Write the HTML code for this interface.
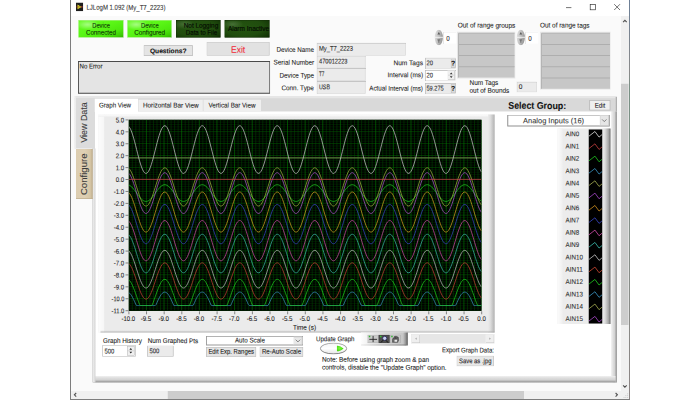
<!DOCTYPE html>
<html><head><meta charset="utf-8"><title>LJLogM 1.092 (My_T7_2223)</title>
<style>
html,body{margin:0;padding:0;background:#fff;}
body{width:700px;height:400px;overflow:hidden;position:relative;font-family:"Liberation Sans",sans-serif;}
#clip{position:absolute;left:0;top:0;width:700px;height:400px;overflow:hidden;background:#fff;}
#root{position:absolute;left:0;top:0;width:2800px;height:1600px;transform:scale(0.25);transform-origin:0 0;}
#root div,#root svg{position:absolute;display:block;}
.t{margin:0;padding:0;white-space:nowrap;-webkit-text-stroke:0.32px currentColor;}
</style></head><body><div id="clip"><div id="root">
<div style="left:280px;top:0px;width:2240px;height:1600px;background:#fafafa;"></div>
<div style="left:284px;top:0px;width:2232px;height:64px;background:#fff;"></div>
<svg style="left:304px;top:9.6px" width="28.8" height="35.2" viewBox="0 0 7.2 8.8"><rect width="7.2" height="8.8" fill="#1e1e1e"/><path d="M1.5 2 L5.6 4.4 L1.5 6.8 Z" fill="#e6d62a"/><path d="M2.6 3.7 L3.9 4.4 L2.6 5.1Z" fill="#1e1e1e"/><path d="M5 4.4 H6.6" stroke="#e84040" stroke-width="0.9"/><path d="M0.5 4.4 H1.6" stroke="#e84040" stroke-width="0.8"/></svg>
<div class="t" style="left:345.6px;top:7.28px;width:381.83px;height:45.44px;line-height:45.44px;font-size:28.8px;color:#303030;transform:rotate(0.2deg) scaleX(0.836);transform-origin:0 50%;">LJLogM 1.092 (My_T7_2223)</div>
<svg style="left:2240px;top:0px" width="264" height="64" viewBox="0 0 66 16"><g stroke="#2a2a2a" stroke-width="0.65" fill="none"><path d="M6 7.6 H11.4"/><rect x="30.2" y="4.4" width="5.2" height="5.4"/><path d="M54.2 4.2 L60 10 M60 4.2 L54.2 10"/></g></svg>
<div style="left:2484px;top:64px;width:32px;height:1500px;background:#f0f0f0;"></div>
<div style="left:2484px;top:335.2px;width:30.4px;height:964.8px;background:#cdcdcd;"></div>
<div style="left:284px;top:1564px;width:2232px;height:32px;background:#f0f0f0;"></div>
<div style="left:670.8px;top:1564px;width:1425.2px;height:32px;background:#cdcdcd;"></div>
<svg style="left:2480px;top:64px" width="40" height="1536" viewBox="0 0 10 384"><g stroke="#505050" stroke-width="1.1" fill="none"><path d="M3.1 6.1 L4.9 4.3 L6.7 6.1"/><path d="M3.1 369.3 L4.9 371.1 L6.7 369.3"/></g></svg>
<svg style="left:284px;top:1560px" width="2240" height="40" viewBox="0 0 560 10"><g stroke="#505050" stroke-width="1.1" fill="none"><path d="M5.2 3 L3.4 4.8 L5.2 6.6"/><path d="M544.6 3 L546.4 4.8 L544.6 6.6"/></g><g fill="#c4c4c4"><rect x="556.2" y="7" width="0.9" height="0.9"/><rect x="554.4" y="7" width="0.9" height="0.9"/><rect x="556.2" y="5.2" width="0.9" height="0.9"/><rect x="552.6" y="7" width="0.9" height="0.9"/><rect x="554.4" y="5.2" width="0.9" height="0.9"/><rect x="556.2" y="3.4" width="0.9" height="0.9"/></g></svg>
<div style="left:280px;top:0px;width:4px;height:1600px;background:#7d7d7d;"></div>
<div style="left:2516px;top:0px;width:4px;height:1600px;background:linear-gradient(180deg,#6c7f96 0%,#8a8a8a 18%,#789084 22%,#86908a 60%,#8c8484 100%);"></div>
<div style="left:280px;top:1596px;width:2240px;height:4px;background:#7d7d7d;"></div>
<div style="left:313.6px;top:80px;width:180.8px;height:70px;background:radial-gradient(ellipse 26% 30% at 20% 26%, rgba(190,255,165,.75) 0%, rgba(120,255,60,0) 100%), linear-gradient(160deg,#66fb22 0%,#5af616 45%,#4ee80e 72%,#3ccc04 90%,#2fae00 100%);box-shadow:inset 0 0 0 2px rgba(215,235,205,.8);overflow:hidden;"></div>
<div style="left:508.8px;top:80px;width:178.4px;height:70px;background:radial-gradient(ellipse 26% 30% at 20% 26%, rgba(190,255,165,.75) 0%, rgba(120,255,60,0) 100%), linear-gradient(160deg,#66fb22 0%,#5af616 45%,#4ee80e 72%,#3ccc04 90%,#2fae00 100%);box-shadow:inset 0 0 0 2px rgba(215,235,205,.8);overflow:hidden;"></div>
<div style="left:704px;top:80px;width:178.4px;height:70px;background:radial-gradient(ellipse 24% 28% at 18% 24%, rgba(85,125,70,.7) 0%, rgba(40,84,24,0) 100%), radial-gradient(ellipse 80% 90% at 42% 42%, #245410 0%, #204c0e 55%, #133606 85%, #0a2400 100%);box-shadow:inset 0 0 0 2px rgba(20,40,10,.7);overflow:hidden;"></div>
<div style="left:898.4px;top:80px;width:179.6px;height:70px;background:radial-gradient(ellipse 24% 28% at 18% 24%, rgba(85,125,70,.7) 0%, rgba(40,84,24,0) 100%), radial-gradient(ellipse 80% 90% at 42% 42%, #245410 0%, #204c0e 55%, #133606 85%, #0a2400 100%);box-shadow:inset 0 0 0 2px rgba(20,40,10,.7);overflow:hidden;"></div>
<div class="t" style="left:360.02px;top:80.06px;width:88.37px;height:43.88px;line-height:43.88px;font-size:27.6px;color:#0a2c05;text-align:center;transform:rotate(0.2deg) scaleX(0.834);transform-origin:50% 50%;">Device</div>
<div class="t" style="left:335.45px;top:107.66px;width:137.5px;height:43.88px;line-height:43.88px;font-size:27.6px;color:#0a2c05;text-align:center;transform:rotate(0.2deg) scaleX(0.899);transform-origin:50% 50%;">Connected</div>
<div class="t" style="left:554.82px;top:80.06px;width:88.37px;height:43.88px;line-height:43.88px;font-size:27.6px;color:#0a2c05;text-align:center;transform:rotate(0.2deg) scaleX(0.834);transform-origin:50% 50%;">Device</div>
<div class="t" style="left:529.49px;top:107.66px;width:139.03px;height:43.88px;line-height:43.88px;font-size:27.6px;color:#0a2c05;text-align:center;transform:rotate(0.2deg) scaleX(0.918);transform-origin:50% 50%;">Configured</div>
<div class="t" style="left:719.95px;top:80.06px;width:152.85px;height:43.88px;line-height:43.88px;font-size:27.6px;color:#040c02;text-align:right;transform:rotate(0.2deg) scaleX(0.927);transform-origin:100% 50%;-webkit-text-stroke:0.64px #040c02;">Not Logging</div>
<div class="t" style="left:723.67px;top:107.66px;width:145.13px;height:43.88px;line-height:43.88px;font-size:27.6px;color:#040c02;text-align:right;transform:rotate(0.2deg) scaleX(0.893);transform-origin:100% 50%;-webkit-text-stroke:0.64px #040c02;">Data to File</div>
<div style="left:898.4px;top:80px;width:179.6px;height:70px;overflow:hidden;background:none;"><div class="t" style="left:13.6px;top:13.2px;line-height:44px;font-size:27.6px;color:#040c02;-webkit-text-stroke:0.64px #040c02;transform:scaleX(0.94);transform-origin:0 50%">Alarm Inactive</div></div>
<div style="left:574.4px;top:180.8px;width:196.8px;height:43.2px;background:#e4e4e4;box-shadow:inset 0 0 0 2.8px #bcbcbc;"></div>
<div class="t" style="left:596.39px;top:181.92px;width:153.62px;height:43.36px;line-height:43.36px;font-size:27.2px;color:#111;text-align:center;font-weight:bold;transform:rotate(0.2deg) scaleX(0.976);transform-origin:50% 50%;">Questions?</div>
<div style="left:826.4px;top:168px;width:252px;height:54.4px;background:#e2e2e2;box-shadow:inset 0 0 0 2.4px #c4c4c4;"></div>
<div class="t" style="left:918.66px;top:169.56px;width:66.68px;height:56.88px;line-height:56.88px;font-size:37.6px;color:#f02838;text-align:center;transform:rotate(0.2deg) scaleX(0.906);transform-origin:50% 50%;">Exit</div>
<div style="left:312px;top:244px;width:768.8px;height:131.2px;background:#e4e4e4;box-shadow:inset 0 0 0 3.6px #4a4a4a;"></div>
<div class="t" style="left:318.4px;top:243.26px;width:108.29px;height:43.88px;line-height:43.88px;font-size:27.6px;color:#161616;transform:rotate(0.2deg) scaleX(0.882);transform-origin:0 50%;">No Error</div>
<div style="left:1266.4px;top:171.2px;width:356.8px;height:50.4px;background:#ebebeb;box-shadow:inset 2.8px 2.8px 0 0 #b9b9b9, inset -2.4px -2.4px 0 0 #d6d6d6;"></div>
<div class="t" style="left:1276px;top:171.52px;width:162.77px;height:43.36px;line-height:43.36px;font-size:27.2px;color:#262626;transform:rotate(0.2deg) scaleX(0.857);transform-origin:0 50%;">My_T7_2223</div>
<div style="left:1266.4px;top:221.6px;width:196px;height:51.2px;background:#ebebeb;box-shadow:inset 2.8px 2.8px 0 0 #b9b9b9, inset -2.4px -2.4px 0 0 #d6d6d6;"></div>
<div class="t" style="left:1276px;top:223.12px;width:140.15px;height:43.36px;line-height:43.36px;font-size:27.2px;color:#262626;transform:rotate(0.2deg) scaleX(0.837);transform-origin:0 50%;">470012223</div>
<div style="left:1266.4px;top:272.8px;width:196px;height:51.2px;background:#ebebeb;box-shadow:inset 2.8px 2.8px 0 0 #b9b9b9, inset -2.4px -2.4px 0 0 #d6d6d6;"></div>
<div class="t" style="left:1276px;top:274.32px;width:35.74px;height:43.36px;line-height:43.36px;font-size:27.2px;color:#262626;transform:rotate(0.2deg) scaleX(0.693);transform-origin:0 50%;">T7</div>
<div style="left:1266.4px;top:324px;width:196px;height:51.2px;background:#ebebeb;box-shadow:inset 2.8px 2.8px 0 0 #b9b9b9, inset -2.4px -2.4px 0 0 #d6d6d6;"></div>
<div class="t" style="left:1276px;top:325.52px;width:59.93px;height:43.36px;line-height:43.36px;font-size:27.2px;color:#262626;transform:rotate(0.2deg) scaleX(0.787);transform-origin:0 50%;">USB</div>
<div class="t" style="left:1086.34px;top:177.26px;width:169.66px;height:43.88px;line-height:43.88px;font-size:27.6px;color:#1c1c1c;text-align:right;transform:rotate(0.2deg) scaleX(0.905);transform-origin:100% 50%;">Device Name</div>
<div class="t" style="left:1075.6px;top:228.46px;width:180.4px;height:43.88px;line-height:43.88px;font-size:27.6px;color:#1c1c1c;text-align:right;transform:rotate(0.2deg) scaleX(0.918);transform-origin:100% 50%;">Serial Number</div>
<div class="t" style="left:1100.63px;top:280.46px;width:155.37px;height:43.88px;line-height:43.88px;font-size:27.6px;color:#1c1c1c;text-align:right;transform:rotate(0.2deg) scaleX(0.912);transform-origin:100% 50%;">Device Type</div>
<div class="t" style="left:1111.34px;top:330.06px;width:144.66px;height:43.88px;line-height:43.88px;font-size:27.6px;color:#1c1c1c;text-align:right;transform:rotate(0.2deg) scaleX(0.924);transform-origin:100% 50%;">Conn. Type</div>
<div style="left:1700px;top:229.6px;width:122.4px;height:44px;background:#ebebeb;box-shadow:inset 2.8px 2.8px 0 0 #b9b9b9, inset -2.4px -2.4px 0 0 #d6d6d6;"></div>
<div class="t" style="left:1706.4px;top:229.92px;width:34.26px;height:43.36px;line-height:43.36px;font-size:27.2px;color:#262626;transform:rotate(0.2deg) scaleX(0.846);transform-origin:0 50%;">20</div>
<div style="left:1700px;top:280px;width:122.4px;height:41.6px;background:#fff;box-shadow:inset 2.8px 2.8px 0 0 #b9b9b9, inset -2.4px -2.4px 0 0 #d6d6d6;"></div>
<div class="t" style="left:1706.4px;top:279.12px;width:34.26px;height:43.36px;line-height:43.36px;font-size:27.2px;color:#262626;transform:rotate(0.2deg) scaleX(0.846);transform-origin:0 50%;">20</div>
<div style="left:1700px;top:332px;width:122.4px;height:43.2px;background:#ebebeb;box-shadow:inset 2.8px 2.8px 0 0 #b9b9b9, inset -2.4px -2.4px 0 0 #d6d6d6;"></div>
<div class="t" style="left:1706.4px;top:331.12px;width:87.2px;height:43.36px;line-height:43.36px;font-size:27.2px;color:#262626;transform:rotate(0.2deg) scaleX(0.827);transform-origin:0 50%;">59.275</div>
<div class="t" style="left:1564.25px;top:229.66px;width:127.75px;height:43.88px;line-height:43.88px;font-size:27.6px;color:#1c1c1c;text-align:right;transform:rotate(0.2deg) scaleX(0.954);transform-origin:100% 50%;">Num Tags</div>
<div class="t" style="left:1534.65px;top:278.46px;width:157.35px;height:43.88px;line-height:43.88px;font-size:27.6px;color:#1c1c1c;text-align:right;transform:rotate(0.2deg) scaleX(0.926);transform-origin:100% 50%;">Interval (ms)</div>
<div class="t" style="left:1450.27px;top:331.66px;width:241.73px;height:43.88px;line-height:43.88px;font-size:27.6px;color:#1c1c1c;text-align:right;transform:rotate(0.2deg) scaleX(0.902);transform-origin:100% 50%;">Actual Interval (ms)</div>
<div style="left:1803.2px;top:233.6px;width:19.2px;height:37.6px;background:#dadada;box-shadow:inset 0 0 0 2px #b0b0b0;"></div>
<div class="t" style="left:1802.37px;top:230.86px;width:20.86px;height:43.88px;line-height:43.88px;font-size:27.6px;color:#111;text-align:center;font-weight:bold;transform:rotate(0.2deg) scaleX(1.000);transform-origin:50% 50%;">?</div>
<div style="left:1803.2px;top:335.2px;width:19.2px;height:37.6px;background:#dadada;box-shadow:inset 0 0 0 2px #b0b0b0;"></div>
<div class="t" style="left:1802.37px;top:332.46px;width:20.86px;height:43.88px;line-height:43.88px;font-size:27.6px;color:#111;text-align:center;font-weight:bold;transform:rotate(0.2deg) scaleX(1.000);transform-origin:50% 50%;">?</div>
<div style="left:1790.4px;top:282.4px;width:29.6px;height:36.8px;background:#f0f0f0;box-shadow:inset 0 0 0 2px #b8b8b8;"></div>
<svg style="left:1790.4px;top:282.4px" width="29.6" height="36.8" viewBox="0 0 7.4 9.2"><path d="M3.7 1.9 L5.1 3.7 H2.3Z M3.7 7.5 L5.1 5.7 H2.3Z" fill="#333"/><path d="M0.6 4.7H6.8" stroke="#b0b0b0" stroke-width="0.4"/></svg>
<div style="left:1772.8px;top:127.2px;width:52px;height:47.2px;background:#fff;box-shadow:inset 2.4px 2.4px 0 0 #d8d8d8;"></div>
<div class="t" style="left:1784.8px;top:132.06px;width:19.35px;height:43.88px;line-height:43.88px;font-size:27.6px;color:#333;transform:rotate(0.2deg) scaleX(0.912);transform-origin:0 50%;">0</div>
<svg style="left:1738.4px;top:117.6px" width="34.4" height="64" viewBox="0 0 8.6 16"><defs><linearGradient id="sg435" x1="0" y1="0" x2="1" y2="0.3"><stop offset="0" stop-color="#e6e6e6"/><stop offset="0.5" stop-color="#c4c4c4"/><stop offset="1" stop-color="#9a9a9a"/></linearGradient></defs><ellipse cx="4.3" cy="8" rx="4.1" ry="7.8" fill="url(#sg435)"/><path d="M0 7.8 H8.6" stroke="#f6f6f6" stroke-width="0.9"/><path d="M4.3 2.6 L5.7 5 H2.9Z" fill="#5a5a5a"/><path d="M2.9 10.4 H5.7 M4.3 10.4 V13.2" stroke="#5a5a5a" stroke-width="0.8" fill="none"/></svg>
<div style="left:2100.8px;top:127.2px;width:52px;height:47.2px;background:#fff;box-shadow:inset 2.4px 2.4px 0 0 #d8d8d8;"></div>
<div class="t" style="left:2112.8px;top:132.06px;width:19.35px;height:43.88px;line-height:43.88px;font-size:27.6px;color:#333;transform:rotate(0.2deg) scaleX(0.912);transform-origin:0 50%;">0</div>
<svg style="left:2066.4px;top:117.6px" width="34.4" height="64" viewBox="0 0 8.6 16"><defs><linearGradient id="sg517" x1="0" y1="0" x2="1" y2="0.3"><stop offset="0" stop-color="#e6e6e6"/><stop offset="0.5" stop-color="#c4c4c4"/><stop offset="1" stop-color="#9a9a9a"/></linearGradient></defs><ellipse cx="4.3" cy="8" rx="4.1" ry="7.8" fill="url(#sg517)"/><path d="M0 7.8 H8.6" stroke="#f6f6f6" stroke-width="0.9"/><path d="M4.3 2.6 L5.7 5 H2.9Z" fill="#5a5a5a"/><path d="M2.9 10.4 H5.7 M4.3 10.4 V13.2" stroke="#5a5a5a" stroke-width="0.8" fill="none"/></svg>
<div style="left:1828px;top:127.2px;width:232.8px;height:186.4px;background:#e6e6e6;"></div>
<div style="left:1833.6px;top:132.8px;width:224.8px;height:177.6px;background:#c7c7c7;"></div>
<div style="left:1833.6px;top:130.8px;width:224.8px;height:4px;background:#b4b4b4;"></div>
<div style="left:1833.6px;top:175.6px;width:224.8px;height:4px;background:#aeaeae;"></div>
<div style="left:1833.6px;top:220.4px;width:224.8px;height:4px;background:#aeaeae;"></div>
<div style="left:1833.6px;top:265.2px;width:224.8px;height:4px;background:#aeaeae;"></div>
<div style="left:1831.6px;top:132.8px;width:4px;height:177.6px;background:#b4b4b4;"></div>
<div style="left:2160px;top:127.2px;width:282.4px;height:231.2px;background:#e6e6e6;"></div>
<div style="left:2165.6px;top:132.8px;width:274.4px;height:222.4px;background:#c7c7c7;"></div>
<div style="left:2165.6px;top:130.8px;width:274.4px;height:4px;background:#b4b4b4;"></div>
<div style="left:2165.6px;top:175.6px;width:274.4px;height:4px;background:#aeaeae;"></div>
<div style="left:2165.6px;top:220.4px;width:274.4px;height:4px;background:#aeaeae;"></div>
<div style="left:2165.6px;top:265.2px;width:274.4px;height:4px;background:#aeaeae;"></div>
<div style="left:2165.6px;top:310px;width:274.4px;height:4px;background:#aeaeae;"></div>
<div style="left:2163.6px;top:132.8px;width:4px;height:222.4px;background:#b4b4b4;"></div>
<div class="t" style="left:1831.2px;top:78.86px;width:249.49px;height:43.88px;line-height:43.88px;font-size:27.6px;color:#1c1c1c;transform:rotate(0.2deg) scaleX(0.937);transform-origin:0 50%;">Out of range groups</div>
<div class="t" style="left:2160px;top:78.86px;width:217.27px;height:43.88px;line-height:43.88px;font-size:27.6px;color:#1c1c1c;transform:rotate(0.2deg) scaleX(0.928);transform-origin:0 50%;">Out of range tags</div>
<div class="t" style="left:1878.4px;top:309.26px;width:127.75px;height:43.88px;line-height:43.88px;font-size:27.6px;color:#1c1c1c;transform:rotate(0.2deg) scaleX(0.931);transform-origin:0 50%;">Num Tags</div>
<div class="t" style="left:1877.6px;top:340.46px;width:174.33px;height:43.88px;line-height:43.88px;font-size:27.6px;color:#1c1c1c;transform:rotate(0.2deg) scaleX(0.935);transform-origin:0 50%;">out of Bounds</div>
<div style="left:2065.6px;top:325.6px;width:81.6px;height:43.2px;background:#ebebeb;box-shadow:inset 2.8px 2.8px 0 0 #b9b9b9, inset -2.4px -2.4px 0 0 #d6d6d6;"></div>
<div class="t" style="left:2075.2px;top:324.72px;width:19.13px;height:43.36px;line-height:43.36px;font-size:27.2px;color:#262626;transform:rotate(0.2deg) scaleX(0.952);transform-origin:0 50%;">0</div>
<div style="left:368px;top:385.6px;width:2099.2px;height:1144px;background:#dcdcdc;"></div>
<div style="left:368px;top:385.6px;width:2099.2px;height:60.8px;background:#d9d9d9;"></div>
<div style="left:297.6px;top:384px;width:2169.6px;height:8.8px;background:#e6e6e6;"></div>
<div style="left:380px;top:446.4px;width:2066.4px;height:1057.6px;background:#fff;"></div>
<div style="left:2446.4px;top:446.4px;width:21.6px;height:1084px;background:linear-gradient(90deg,#f0f0f0 0%,#dedede 30%,#d2d2d2 60%,#aaaaaa 78%,#9e9e9e 100%);"></div>
<div style="left:372px;top:1504px;width:2090.4px;height:26.4px;background:linear-gradient(180deg,#f0f0f0 0%,#dedede 30%,#d2d2d2 62%,#aaaaaa 80%,#9e9e9e 100%);"></div>
<div style="left:2461.6px;top:388px;width:6.4px;height:58.4px;background:linear-gradient(90deg,#c4c4c4,#a6a6a6);"></div>
<div style="left:372px;top:594.4px;width:9.6px;height:935.2px;background:linear-gradient(90deg,#ececec,#d4d4d4);"></div>
<div style="left:297.6px;top:392px;width:81.6px;height:202.4px;background:#dcdcdc;"></div>
<div style="left:297.6px;top:384.8px;width:6.4px;height:209.6px;background:linear-gradient(90deg,#f6f6f6,#e8e8e8);"></div>
<div style="left:304px;top:596px;width:67.2px;height:200px;background:linear-gradient(90deg,#dccdb0,#dfd0b4 50%,#d6c6a6 85%,#bdab8a 100%);box-shadow:inset 0 -3.2px 0 0 #c0b090;"></div>
<div class="t" style="left:332.8px;top:490.4px;width:0;height:0;"><div class="t" style="left:-120px;top:-32px;width:240px;height:64px;line-height:64px;text-align:center;font-size:38.4px;color:#3a3a3a;transform:rotate(-90deg) scaleX(0.93);">View Data</div></div>
<div class="t" style="left:332.8px;top:696.8px;width:0;height:0;"><div class="t" style="left:-120px;top:-32px;width:240px;height:64px;line-height:64px;text-align:center;font-size:38.4px;color:#3a3a3a;transform:rotate(-90deg) scaleX(1.0);">Configure</div></div>
<div style="left:379.2px;top:395.2px;width:172.8px;height:52.8px;background:#fff;"></div>
<div style="left:554.4px;top:399.2px;width:256.8px;height:47.2px;background:#efefef;"></div>
<div style="left:814.4px;top:399.2px;width:229.6px;height:47.2px;background:#efefef;"></div>
<div class="t" style="left:396px;top:398.86px;width:147.71px;height:43.88px;line-height:43.88px;font-size:27.6px;color:#1a1a1a;transform:rotate(0.2deg) scaleX(0.891);transform-origin:0 50%;">Graph View</div>
<div class="t" style="left:572px;top:398.86px;width:245.87px;height:43.88px;line-height:43.88px;font-size:27.6px;color:#1a1a1a;transform:rotate(0.2deg) scaleX(0.918);transform-origin:0 50%;">Horizontal Bar View</div>
<div class="t" style="left:833.6px;top:398.86px;width:212.13px;height:43.88px;line-height:43.88px;font-size:27.6px;color:#1a1a1a;transform:rotate(0.2deg) scaleX(0.903);transform-origin:0 50%;">Vertical Bar View</div>
<div class="t" style="left:2032.8px;top:392.64px;width:255.78px;height:57.92px;line-height:57.92px;font-size:38.4px;color:#101010;font-weight:bold;transform:rotate(0.2deg) scaleX(0.921);transform-origin:0 50%;">Select Group:</div>
<div style="left:2356.8px;top:400px;width:85.6px;height:41.6px;background:#efefef;box-shadow:inset 0 0 0 3.2px #b4b4b4;"></div>
<div class="t" style="left:2373.82px;top:399.66px;width:51.56px;height:43.88px;line-height:43.88px;font-size:27.6px;color:#161616;text-align:center;transform:rotate(0.2deg) scaleX(0.883);transform-origin:50% 50%;">Edit</div>
<div style="left:2028.8px;top:457.6px;width:410.4px;height:48.8px;background:#fff;box-shadow:inset 0 0 0 4px #909090;"></div>
<div style="left:2399.2px;top:461.6px;width:36px;height:40.8px;background:#e6e6e6;box-shadow:inset 0 0 0 2px #c0c0c0;"></div>
<svg style="left:2398.4px;top:460px" width="38.4" height="43.2" viewBox="0 0 9.6 10.8"><path d="M2.6 4.4 L4.8 6.6 L7 4.4" stroke="#555" stroke-width="0.7" fill="none"/></svg>
<div class="t" style="left:2087.78px;top:458.64px;width:252.43px;height:47.52px;line-height:47.52px;font-size:30.4px;color:#333;text-align:center;transform:rotate(0.2deg) scaleX(0.982);transform-origin:50% 50%;">Analog Inputs (16)</div>
<div style="left:393.6px;top:457.6px;width:1584.8px;height:872.8px;background:#ebebeb;"></div>
<div style="left:393.6px;top:457.6px;width:25.6px;height:872.8px;background:linear-gradient(90deg,#fcfcfc,#f7f7f7 80%,#ebebeb);"></div>
<div style="left:393.6px;top:457.6px;width:1584.8px;height:9.6px;background:linear-gradient(180deg,#fcfcfc,#f0f0f0);"></div>
<div style="left:1952px;top:457.6px;width:26.4px;height:872.8px;background:linear-gradient(90deg,#ebebeb,#dcdcdc 40%,#bdbdbd 85%,#a2a2a2);"></div>
<div style="left:401.6px;top:1320.8px;width:1576.8px;height:9.6px;background:linear-gradient(180deg,rgba(200,200,200,0),rgba(170,170,170,.8));"></div>
<div style="left:515.2px;top:479.2px;width:1411.2px;height:764.8px;background:#000;"></div>
<svg style="left:515.2px;top:479.2px" width="1411.2" height="763.2" viewBox="0 0 352.8 190.8"><rect width="352.8" height="190.8" fill="#000"/><path d="M0 2.39H352.8M0 4.77H352.8M0 7.15H352.8M0 9.54H352.8M0 14.31H352.8M0 16.7H352.8M0 19.08H352.8M0 21.46H352.8M0 26.24H352.8M0 28.62H352.8M0 31.01H352.8M0 33.39H352.8M0 38.16H352.8M0 40.55H352.8M0 42.93H352.8M0 45.32H352.8M0 50.09H352.8M0 52.47H352.8M0 54.86H352.8M0 57.24H352.8M0 62.01H352.8M0 64.4H352.8M0 66.78H352.8M0 69.17H352.8M0 73.94H352.8M0 76.32H352.8M0 78.71H352.8M0 81.09H352.8M0 85.86H352.8M0 88.25H352.8M0 90.63H352.8M0 93.02H352.8M0 97.79H352.8M0 100.17H352.8M0 102.56H352.8M0 104.94H352.8M0 109.71H352.8M0 112.1H352.8M0 114.48H352.8M0 116.87H352.8M0 121.64H352.8M0 124.02H352.8M0 126.41H352.8M0 128.79H352.8M0 133.56H352.8M0 135.95H352.8M0 138.33H352.8M0 140.72H352.8M0 145.49H352.8M0 147.87H352.8M0 150.26H352.8M0 152.64H352.8M0 157.41H352.8M0 159.8H352.8M0 162.18H352.8M0 164.57H352.8M0 169.34H352.8M0 171.72H352.8M0 174.11H352.8M0 176.49H352.8M0 181.26H352.8M0 183.65H352.8M0 186.03H352.8M0 188.42H352.8" stroke="#002c00" stroke-width="0.55" fill="none"/><path d="M3.53 0V190.8M7.06 0V190.8M10.58 0V190.8M14.11 0V190.8M21.17 0V190.8M24.7 0V190.8M28.22 0V190.8M31.75 0V190.8M38.81 0V190.8M42.34 0V190.8M45.86 0V190.8M49.39 0V190.8M56.45 0V190.8M59.98 0V190.8M63.5 0V190.8M67.03 0V190.8M74.09 0V190.8M77.62 0V190.8M81.14 0V190.8M84.67 0V190.8M91.73 0V190.8M95.26 0V190.8M98.78 0V190.8M102.31 0V190.8M109.37 0V190.8M112.9 0V190.8M116.42 0V190.8M119.95 0V190.8M127.01 0V190.8M130.54 0V190.8M134.06 0V190.8M137.59 0V190.8M144.65 0V190.8M148.18 0V190.8M151.7 0V190.8M155.23 0V190.8M162.29 0V190.8M165.82 0V190.8M169.34 0V190.8M172.87 0V190.8M179.93 0V190.8M183.46 0V190.8M186.98 0V190.8M190.51 0V190.8M197.57 0V190.8M201.1 0V190.8M204.62 0V190.8M208.15 0V190.8M215.21 0V190.8M218.74 0V190.8M222.26 0V190.8M225.79 0V190.8M232.85 0V190.8M236.38 0V190.8M239.9 0V190.8M243.43 0V190.8M250.49 0V190.8M254.02 0V190.8M257.54 0V190.8M261.07 0V190.8M268.13 0V190.8M271.66 0V190.8M275.18 0V190.8M278.71 0V190.8M285.77 0V190.8M289.3 0V190.8M292.82 0V190.8M296.35 0V190.8M303.41 0V190.8M306.94 0V190.8M310.46 0V190.8M313.99 0V190.8M321.05 0V190.8M324.58 0V190.8M328.1 0V190.8M331.63 0V190.8M338.69 0V190.8M342.22 0V190.8M345.74 0V190.8M349.27 0V190.8" stroke="#004400" stroke-width="0.55" fill="none"/><path d="M0 0H352.8M0 11.93H352.8M0 23.85H352.8M0 35.78H352.8M0 47.7H352.8M0 59.62H352.8M0 71.55H352.8M0 83.48H352.8M0 95.4H352.8M0 107.33H352.8M0 119.25H352.8M0 131.18H352.8M0 143.1H352.8M0 155.03H352.8M0 166.95H352.8M0 178.88H352.8M0 190.8H352.8" stroke="#005600" stroke-width="0.6" fill="none"/><path d="M0 0V190.8M17.64 0V190.8M35.28 0V190.8M52.92 0V190.8M70.56 0V190.8M88.2 0V190.8M105.84 0V190.8M123.48 0V190.8M141.12 0V190.8M158.76 0V190.8M176.4 0V190.8M194.04 0V190.8M211.68 0V190.8M229.32 0V190.8M246.96 0V190.8M264.6 0V190.8M282.24 0V190.8M299.88 0V190.8M317.52 0V190.8M335.16 0V190.8M352.8 0V190.8" stroke="#007a00" stroke-width="0.6" fill="none"/><polyline points="0,172.77 0.98,173.54 1.96,174.66 2.94,176.11 3.92,177.85 4.9,179.82 5.88,181.97 6.86,184.25 7.84,185.79 8.82,185.79 9.8,185.79 10.78,185.79 11.76,185.79 12.74,185.79 13.72,185.79 14.7,185.79 15.68,185.79 16.66,185.79 17.64,185.79 18.62,185.79 19.6,185.79 20.58,185.79 21.56,185.79 22.54,185.79 23.52,185.79 24.5,185.79 25.48,185.79 26.46,185.79 27.44,184.73 28.42,182.43 29.4,180.24 30.38,178.23 31.36,176.44 32.34,174.93 33.32,173.74 34.3,172.9 35.28,172.42 36.26,172.33 37.24,172.63 38.22,173.3 39.2,174.33 40.18,175.7 41.16,177.36 42.14,179.27 43.12,181.38 44.1,183.64 45.08,185.79 46.06,185.79 47.04,185.79 48.02,185.79 49,185.79 49.98,185.79 50.96,185.79 51.94,185.79 52.92,185.79 53.9,185.79 54.88,185.79 55.86,185.79 56.84,185.79 57.82,185.79 58.8,185.79 59.78,185.79 60.76,185.79 61.74,185.79 62.72,185.79 63.7,185.79 64.68,185.35 65.66,183.03 66.64,180.81 67.62,178.74 68.6,176.89 69.58,175.31 70.56,174.02 71.54,173.08 72.52,172.51 73.5,172.32 74.48,172.51 75.46,173.08 76.44,174.02 77.42,175.31 78.4,176.89 79.38,178.74 80.36,180.81 81.34,183.03 82.32,185.35 83.3,185.79 84.28,185.79 85.26,185.79 86.24,185.79 87.22,185.79 88.2,185.79 89.18,185.79 90.16,185.79 91.14,185.79 92.12,185.79 93.1,185.79 94.08,185.79 95.06,185.79 96.04,185.79 97.02,185.79 98,185.79 98.98,185.79 99.96,185.79 100.94,185.79 101.92,185.79 102.9,183.64 103.88,181.38 104.86,179.27 105.84,177.36 106.82,175.7 107.8,174.33 108.78,173.3 109.76,172.63 110.74,172.33 111.72,172.42 112.7,172.9 113.68,173.74 114.66,174.93 115.64,176.44 116.62,178.23 117.6,180.24 118.58,182.43 119.56,184.73 120.54,185.79 121.52,185.79 122.5,185.79 123.48,185.79 124.46,185.79 125.44,185.79 126.42,185.79 127.4,185.79 128.38,185.79 129.36,185.79 130.34,185.79 131.32,185.79 132.3,185.79 133.28,185.79 134.26,185.79 135.24,185.79 136.22,185.79 137.2,185.79 138.18,185.79 139.16,185.79 140.14,184.25 141.12,181.97 142.1,179.82 143.08,177.85 144.06,176.11 145.04,174.66 146.02,173.54 147,172.77 147.98,172.37 148.96,172.36 149.94,172.73 150.92,173.48 151.9,174.59 152.88,176.02 153.86,177.73 154.84,179.69 155.82,181.84 156.8,184.11 157.78,185.79 158.76,185.79 159.74,185.79 160.72,185.79 161.7,185.79 162.68,185.79 163.66,185.79 164.64,185.79 165.62,185.79 166.6,185.79 167.58,185.79 168.56,185.79 169.54,185.79 170.52,185.79 171.5,185.79 172.48,185.79 173.46,185.79 174.44,185.79 175.42,185.79 176.4,185.79 177.38,184.87 178.36,182.57 179.34,180.37 180.32,178.35 181.3,176.55 182.28,175.02 183.26,173.8 184.24,172.94 185.22,172.44 186.2,172.32 187.18,172.6 188.16,173.25 189.14,174.26 190.12,175.61 191.1,177.25 192.08,179.15 193.06,181.25 194.04,183.5 195.02,185.79 196,185.79 196.98,185.79 197.96,185.79 198.94,185.79 199.92,185.79 200.9,185.79 201.88,185.79 202.86,185.79 203.84,185.79 204.82,185.79 205.8,185.79 206.78,185.79 207.76,185.79 208.74,185.79 209.72,185.79 210.7,185.79 211.68,185.79 212.66,185.79 213.64,185.79 214.62,185.5 215.6,183.17 216.58,180.94 217.56,178.86 218.54,177 219.52,175.39 220.5,174.09 221.48,173.13 222.46,172.53 223.44,172.32 224.42,172.49 225.4,173.04 226.38,173.96 227.36,175.22 228.34,176.79 229.32,178.62 230.3,180.68 231.28,182.89 232.26,185.21 233.24,185.79 234.22,185.79 235.2,185.79 236.18,185.79 237.16,185.79 238.14,185.79 239.12,185.79 240.1,185.79 241.08,185.79 242.06,185.79 243.04,185.79 244.02,185.79 245,185.79 245.98,185.79 246.96,185.79 247.94,185.79 248.92,185.79 249.9,185.79 250.88,185.79 251.86,185.79 252.84,183.78 253.82,181.52 254.8,179.4 255.78,177.47 256.76,175.79 257.74,174.41 258.72,173.35 259.7,172.66 260.68,172.34 261.66,172.4 262.64,172.86 263.62,173.68 264.6,174.85 265.58,176.34 266.56,178.11 267.54,180.11 268.52,182.29 269.5,184.59 270.48,185.79 271.46,185.79 272.44,185.79 273.42,185.79 274.4,185.79 275.38,185.79 276.36,185.79 277.34,185.79 278.32,185.79 279.3,185.79 280.28,185.79 281.26,185.79 282.24,185.79 283.22,185.79 284.2,185.79 285.18,185.79 286.16,185.79 287.14,185.79 288.12,185.79 289.1,185.79 290.08,184.4 291.06,182.11 292.04,179.94 293.02,177.96 294,176.21 294.98,174.74 295.96,173.6 296.94,172.8 297.92,172.38 298.9,172.35 299.88,172.7 300.86,173.43 301.84,174.51 302.82,175.92 303.8,177.62 304.78,179.56 305.76,181.7 306.74,183.97 307.72,185.79 308.7,185.79 309.68,185.79 310.66,185.79 311.64,185.79 312.62,185.79 313.6,185.79 314.58,185.79 315.56,185.79 316.54,185.79 317.52,185.79 318.5,185.79 319.48,185.79 320.46,185.79 321.44,185.79 322.42,185.79 323.4,185.79 324.38,185.79 325.36,185.79 326.34,185.79 327.32,185.02 328.3,182.71 329.28,180.5 330.26,178.47 331.24,176.65 332.22,175.1 333.2,173.87 334.18,172.98 335.16,172.46 336.14,172.32 337.12,172.57 338.1,173.2 339.08,174.19 340.06,175.51 341.04,177.14 342.02,179.03 343,181.12 343.98,183.36 344.96,185.69 345.94,185.79 346.92,185.79 347.9,185.79 348.88,185.79 349.86,185.79 350.84,185.79 351.82,185.79 352.8,185.79" stroke="#3b94c4" stroke-width="0.7" fill="none" stroke-linejoin="round"/><polyline points="0,160.09 0.98,161.01 1.96,162.34 2.94,164.06 3.92,166.12 4.9,168.46 5.88,171.01 6.86,173.72 7.84,176.51 8.82,179.3 9.8,182.01 10.78,184.59 11.76,185.79 12.74,185.79 13.72,185.79 14.7,185.79 15.68,185.79 16.66,185.79 17.64,185.79 18.62,185.79 19.6,185.79 20.58,185.79 21.56,185.79 22.54,185.79 23.52,185.09 24.5,182.55 25.48,179.86 26.46,177.08 27.44,174.29 28.42,171.56 29.4,168.96 30.38,166.57 31.36,164.46 32.34,162.66 33.32,161.25 34.3,160.24 35.28,159.68 36.26,159.57 37.24,159.92 38.22,160.72 39.2,161.95 40.18,163.57 41.16,165.54 42.14,167.81 43.12,170.32 44.1,172.99 45.08,175.77 46.06,178.56 47.04,181.31 48.02,183.92 49,185.79 49.98,185.79 50.96,185.79 51.94,185.79 52.92,185.79 53.9,185.79 54.88,185.79 55.86,185.79 56.84,185.79 57.82,185.79 58.8,185.79 59.78,185.79 60.76,185.72 61.74,183.24 62.72,180.59 63.7,177.82 64.68,175.03 65.66,172.27 66.64,169.63 67.62,167.18 68.6,164.99 69.58,163.1 70.56,161.58 71.54,160.47 72.52,159.79 73.5,159.56 74.48,159.79 75.46,160.47 76.44,161.58 77.42,163.1 78.4,164.99 79.38,167.18 80.36,169.63 81.34,172.27 82.32,175.03 83.3,177.82 84.28,180.59 85.26,183.24 86.24,185.72 87.22,185.79 88.2,185.79 89.18,185.79 90.16,185.79 91.14,185.79 92.12,185.79 93.1,185.79 94.08,185.79 95.06,185.79 96.04,185.79 97.02,185.79 98,185.79 98.98,183.92 99.96,181.31 100.94,178.56 101.92,175.77 102.9,172.99 103.88,170.32 104.86,167.81 105.84,165.54 106.82,163.57 107.8,161.95 108.78,160.72 109.76,159.92 110.74,159.57 111.72,159.68 112.7,160.24 113.68,161.25 114.66,162.66 115.64,164.46 116.62,166.57 117.6,168.96 118.58,171.56 119.56,174.29 120.54,177.08 121.52,179.86 122.5,182.55 123.48,185.09 124.46,185.79 125.44,185.79 126.42,185.79 127.4,185.79 128.38,185.79 129.36,185.79 130.34,185.79 131.32,185.79 132.3,185.79 133.28,185.79 134.26,185.79 135.24,185.79 136.22,184.59 137.2,182.01 138.18,179.3 139.16,176.51 140.14,173.72 141.12,171.01 142.1,168.46 143.08,166.12 144.06,164.06 145.04,162.34 146.02,161.01 147,160.09 147.98,159.62 148.96,159.61 149.94,160.05 150.92,160.94 151.9,162.25 152.88,163.95 153.86,165.98 154.84,168.31 155.82,170.85 156.8,173.55 157.78,176.34 158.76,179.13 159.74,181.85 160.72,184.43 161.7,185.79 162.68,185.79 163.66,185.79 164.64,185.79 165.62,185.79 166.6,185.79 167.58,185.79 168.56,185.79 169.54,185.79 170.52,185.79 171.5,185.79 172.48,185.79 173.46,185.23 174.44,182.71 175.42,180.03 176.4,177.25 177.38,174.46 178.36,171.72 179.34,169.12 180.32,166.71 181.3,164.58 182.28,162.76 183.26,161.32 184.24,160.29 185.22,159.7 186.2,159.57 187.18,159.89 188.16,160.66 189.14,161.86 190.12,163.46 191.1,165.41 192.08,167.67 193.06,170.16 194.04,172.83 195.02,175.6 196,178.39 196.98,181.14 197.96,183.77 198.94,185.79 199.92,185.79 200.9,185.79 201.88,185.79 202.86,185.79 203.84,185.79 204.82,185.79 205.8,185.79 206.78,185.79 207.76,185.79 208.74,185.79 209.72,185.79 210.7,185.79 211.68,183.4 212.66,180.75 213.64,177.99 214.62,175.2 215.6,172.44 216.58,169.79 217.56,167.33 218.54,165.11 219.52,163.21 220.5,161.67 221.48,160.52 222.46,159.81 223.44,159.56 224.42,159.76 225.4,160.41 226.38,161.5 227.36,163 228.34,164.86 229.32,167.04 230.3,169.48 231.28,172.11 232.26,174.86 233.24,177.65 234.22,180.42 235.2,183.09 236.18,185.58 237.16,185.79 238.14,185.79 239.12,185.79 240.1,185.79 241.08,185.79 242.06,185.79 243.04,185.79 244.02,185.79 245,185.79 245.98,185.79 246.96,185.79 247.94,185.79 248.92,184.08 249.9,181.47 250.88,178.73 251.86,175.94 252.84,173.16 253.82,170.48 254.8,167.96 255.78,165.67 256.76,163.68 257.74,162.04 258.72,160.79 259.7,159.96 260.68,159.58 261.66,159.66 262.64,160.2 263.62,161.17 264.6,162.57 265.58,164.34 266.56,166.44 267.54,168.81 268.52,171.39 269.5,174.12 270.48,176.91 271.46,179.69 272.44,182.39 273.42,184.94 274.4,185.79 275.38,185.79 276.36,185.79 277.34,185.79 278.32,185.79 279.3,185.79 280.28,185.79 281.26,185.79 282.24,185.79 283.22,185.79 284.2,185.79 285.18,185.79 286.16,184.74 287.14,182.18 288.12,179.47 289.1,176.68 290.08,173.89 291.06,171.18 292.04,168.61 293.02,166.25 294,164.18 294.98,162.44 295.96,161.08 296.94,160.14 297.92,159.64 298.9,159.59 299.88,160.01 300.86,160.87 301.84,162.16 302.82,163.83 303.8,165.85 304.78,168.16 305.76,170.69 306.74,173.39 307.72,176.17 308.7,178.96 309.68,181.69 310.66,184.28 311.64,185.79 312.62,185.79 313.6,185.79 314.58,185.79 315.56,185.79 316.54,185.79 317.52,185.79 318.5,185.79 319.48,185.79 320.46,185.79 321.44,185.79 322.42,185.79 323.4,185.38 324.38,182.87 325.36,180.2 326.34,177.42 327.32,174.63 328.3,171.89 329.28,169.27 330.26,166.85 331.24,164.7 332.22,162.86 333.2,161.4 334.18,160.34 335.16,159.73 336.14,159.56 337.12,159.86 338.1,160.6 339.08,161.78 340.06,163.35 341.04,165.28 342.02,167.52 343,170 343.98,172.66 344.96,175.42 345.94,178.22 346.92,180.97 347.9,183.61 348.88,185.79 349.86,185.79 350.84,185.79 351.82,185.79 352.8,185.79" stroke="#1fd11f" stroke-width="0.7" fill="none" stroke-linejoin="round"/><polyline points="0,143.67 0.98,144.64 1.96,146.06 2.94,147.89 3.92,150.07 4.9,152.56 5.88,155.28 6.86,158.16 7.84,161.12 8.82,164.08 9.8,166.97 10.78,169.7 11.76,172.21 12.74,174.42 13.72,176.27 14.7,177.72 15.68,178.73 16.66,179.26 17.64,179.31 18.62,178.88 19.6,177.96 20.58,176.6 21.56,174.83 22.54,172.69 23.52,170.24 24.5,167.54 25.48,164.68 26.46,161.73 27.44,158.76 28.42,155.86 29.4,153.1 30.38,150.56 31.36,148.31 32.34,146.4 33.32,144.9 34.3,143.83 35.28,143.23 36.26,143.12 37.24,143.49 38.22,144.34 39.2,145.64 40.18,147.37 41.16,149.46 42.14,151.88 43.12,154.54 44.1,157.38 45.08,160.33 46.06,163.3 47.04,166.22 48.02,169 49,171.57 49.98,173.86 50.96,175.82 51.94,177.38 52.92,178.51 53.9,179.17 54.88,179.35 55.86,179.04 56.84,178.25 57.82,177.01 58.8,175.34 59.78,173.29 60.76,170.91 61.74,168.28 62.72,165.45 63.7,162.52 64.68,159.54 65.66,156.62 66.64,153.81 67.62,151.21 68.6,148.87 69.58,146.87 70.56,145.26 71.54,144.07 72.52,143.34 73.5,143.1 74.48,143.34 75.46,144.07 76.44,145.26 77.42,146.87 78.4,148.87 79.38,151.21 80.36,153.81 81.34,156.62 82.32,159.54 83.3,162.52 84.28,165.45 85.26,168.28 86.24,170.91 87.22,173.29 88.2,175.34 89.18,177.01 90.16,178.25 91.14,179.04 92.12,179.35 93.1,179.17 94.08,178.51 95.06,177.38 96.04,175.82 97.02,173.86 98,171.57 98.98,169 99.96,166.22 100.94,163.3 101.92,160.33 102.9,157.38 103.88,154.54 104.86,151.88 105.84,149.46 106.82,147.37 107.8,145.64 108.78,144.34 109.76,143.49 110.74,143.12 111.72,143.23 112.7,143.83 113.68,144.9 114.66,146.4 115.64,148.31 116.62,150.56 117.6,153.1 118.58,155.86 119.56,158.76 120.54,161.73 121.52,164.68 122.5,167.54 123.48,170.24 124.46,172.69 125.44,174.83 126.42,176.6 127.4,177.96 128.38,178.88 129.36,179.31 130.34,179.26 131.32,178.73 132.3,177.72 133.28,176.27 134.26,174.42 135.24,172.21 136.22,169.7 137.2,166.97 138.18,164.08 139.16,161.12 140.14,158.16 141.12,155.28 142.1,152.56 143.08,150.07 144.06,147.89 145.04,146.06 146.02,144.64 147,143.67 147.98,143.17 148.96,143.15 149.94,143.63 150.92,144.57 151.9,145.96 152.88,147.77 153.86,149.93 154.84,152.4 155.82,155.11 156.8,157.98 157.78,160.94 158.76,163.9 159.74,166.8 160.72,169.54 161.7,172.06 162.68,174.29 163.66,176.17 164.64,177.65 165.62,178.68 166.6,179.24 167.58,179.32 168.56,178.92 169.54,178.03 170.52,176.7 171.5,174.95 172.48,172.83 173.46,170.39 174.44,167.71 175.42,164.86 176.4,161.91 177.38,158.94 178.36,156.03 179.34,153.26 180.32,150.71 181.3,148.44 182.28,146.51 183.26,144.98 184.24,143.88 185.22,143.25 186.2,143.11 187.18,143.45 188.16,144.27 189.14,145.55 190.12,147.25 191.1,149.32 192.08,151.72 193.06,154.37 194.04,157.21 195.02,160.15 196,163.12 196.98,166.04 197.96,168.83 198.94,171.42 199.92,173.73 200.9,175.71 201.88,177.3 202.86,178.45 203.84,179.14 204.82,179.35 205.8,179.07 206.78,178.31 207.76,177.1 208.74,175.45 209.72,173.42 210.7,171.07 211.68,168.45 212.66,165.63 213.64,162.7 214.62,159.72 215.6,156.79 216.58,153.98 217.56,151.36 218.54,149.01 219.52,146.98 220.5,145.34 221.48,144.13 222.46,143.37 223.44,143.1 224.42,143.31 225.4,144.01 226.38,145.17 227.36,146.76 228.34,148.74 229.32,151.06 230.3,153.65 231.28,156.44 232.26,159.36 233.24,162.33 234.22,165.28 235.2,168.11 236.18,170.76 237.16,173.15 238.14,175.22 239.12,176.92 240.1,178.19 241.08,179 242.06,179.34 243.04,179.19 244.02,178.56 245,177.46 245.98,175.93 246.96,173.99 247.94,171.72 248.92,169.16 249.9,166.39 250.88,163.48 251.86,160.51 252.84,157.56 253.82,154.71 254.8,152.03 255.78,149.6 256.76,147.48 257.74,145.74 258.72,144.41 259.7,143.53 260.68,143.13 261.66,143.21 262.64,143.78 263.62,144.82 264.6,146.3 265.58,148.18 266.56,150.41 267.54,152.94 268.52,155.68 269.5,158.58 270.48,161.54 271.46,164.5 272.44,167.37 273.42,170.08 274.4,172.54 275.38,174.71 276.36,176.51 277.34,177.89 278.32,178.83 279.3,179.3 280.28,179.28 281.26,178.77 282.24,177.8 283.22,176.37 284.2,174.54 285.18,172.35 286.16,169.86 287.14,167.14 288.12,164.26 289.1,161.3 290.08,158.34 291.06,155.45 292.04,152.72 293.02,150.22 294,148.01 294.98,146.16 295.96,144.72 296.94,143.72 297.92,143.19 298.9,143.14 299.88,143.58 300.86,144.5 301.84,145.87 302.82,147.64 303.8,149.79 304.78,152.24 305.76,154.94 306.74,157.8 307.72,160.76 308.7,163.72 309.68,166.62 310.66,169.38 311.64,171.92 312.62,174.17 313.6,176.07 314.58,177.57 315.56,178.63 316.54,179.22 317.52,179.33 318.5,178.96 319.48,178.1 320.46,176.79 321.44,175.07 322.42,172.97 323.4,170.55 324.38,167.88 325.36,165.04 326.34,162.09 327.32,159.12 328.3,156.21 329.28,153.43 330.26,150.86 331.24,148.57 332.22,146.62 333.2,145.06 334.18,143.94 335.16,143.28 336.14,143.1 337.12,143.42 338.1,144.21 339.08,145.46 340.06,147.13 341.04,149.19 342.02,151.56 343,154.2 343.98,157.03 344.96,159.97 345.94,162.94 346.92,165.87 347.9,168.67 348.88,171.27 349.86,173.6 350.84,175.6 351.82,177.21 352.8,178.39" stroke="#cf4238" stroke-width="0.7" fill="none" stroke-linejoin="round"/><polyline points="0,131.17 0.98,132.18 1.96,133.66 2.94,135.56 3.92,137.83 4.9,140.41 5.88,143.24 6.86,146.23 7.84,149.31 8.82,152.39 9.8,155.39 10.78,158.23 11.76,160.84 12.74,163.13 13.72,165.06 14.7,166.57 15.68,167.61 16.66,168.17 17.64,168.22 18.62,167.77 19.6,166.82 20.58,165.4 21.56,163.56 22.54,161.33 23.52,158.79 24.5,155.99 25.48,153.01 26.46,149.94 27.44,146.86 28.42,143.84 29.4,140.97 30.38,138.33 31.36,135.99 32.34,134.01 33.32,132.45 34.3,131.34 35.28,130.72 36.26,130.6 37.24,130.98 38.22,131.87 39.2,133.22 40.18,135.01 41.16,137.19 42.14,139.7 43.12,142.47 44.1,145.43 45.08,148.49 46.06,151.58 47.04,154.61 48.02,157.5 49,160.17 49.98,162.56 50.96,164.59 51.94,166.21 52.92,167.38 53.9,168.07 54.88,168.26 55.86,167.94 56.84,167.12 57.82,165.82 58.8,164.09 59.78,161.96 60.76,159.49 61.74,156.75 62.72,153.81 63.7,150.76 64.68,147.67 65.66,144.63 66.64,141.71 67.62,139.01 68.6,136.58 69.58,134.5 70.56,132.82 71.54,131.59 72.52,130.83 73.5,130.58 74.48,130.83 75.46,131.59 76.44,132.82 77.42,134.5 78.4,136.58 79.38,139.01 80.36,141.71 81.34,144.63 82.32,147.67 83.3,150.76 84.28,153.81 85.26,156.75 86.24,159.49 87.22,161.96 88.2,164.09 89.18,165.82 90.16,167.12 91.14,167.94 92.12,168.26 93.1,168.07 94.08,167.38 95.06,166.21 96.04,164.59 97.02,162.56 98,160.17 98.98,157.5 99.96,154.61 100.94,151.58 101.92,148.49 102.9,145.43 103.88,142.47 104.86,139.7 105.84,137.19 106.82,135.01 107.8,133.22 108.78,131.87 109.76,130.98 110.74,130.6 111.72,130.72 112.7,131.34 113.68,132.45 114.66,134.01 115.64,135.99 116.62,138.33 117.6,140.97 118.58,143.84 119.56,146.86 120.54,149.94 121.52,153.01 122.5,155.99 123.48,158.79 124.46,161.33 125.44,163.56 126.42,165.4 127.4,166.82 128.38,167.77 129.36,168.22 130.34,168.17 131.32,167.61 132.3,166.57 133.28,165.06 134.26,163.13 135.24,160.84 136.22,158.23 137.2,155.39 138.18,152.39 139.16,149.31 140.14,146.23 141.12,143.24 142.1,140.41 143.08,137.83 144.06,135.56 145.04,133.66 146.02,132.18 147,131.17 147.98,130.65 148.96,130.63 149.94,131.12 150.92,132.11 151.9,133.55 152.88,135.43 153.86,137.68 154.84,140.25 155.82,143.06 156.8,146.04 157.78,149.12 158.76,152.2 159.74,155.21 160.72,158.07 161.7,160.69 162.68,163 163.66,164.95 164.64,166.49 165.62,167.56 166.6,168.15 167.58,168.23 168.56,167.81 169.54,166.89 170.52,165.5 171.5,163.68 172.48,161.48 173.46,158.95 174.44,156.17 175.42,153.2 176.4,150.13 177.38,147.04 178.36,144.02 179.34,141.14 180.32,138.49 181.3,136.13 182.28,134.12 183.26,132.53 184.24,131.39 185.22,130.74 186.2,130.59 187.18,130.95 188.16,131.8 189.14,133.13 190.12,134.89 191.1,137.05 192.08,139.54 193.06,142.29 194.04,145.24 195.02,148.3 196,151.39 196.98,154.43 197.96,157.33 198.94,160.02 199.92,162.42 200.9,164.48 201.88,166.12 202.86,167.32 203.84,168.04 204.82,168.26 205.8,167.97 206.78,167.18 207.76,165.92 208.74,164.21 209.72,162.1 210.7,159.65 211.68,156.92 212.66,154 213.64,150.95 214.62,147.86 215.6,144.81 216.58,141.89 217.56,139.17 218.54,136.72 219.52,134.62 220.5,132.91 221.48,131.65 222.46,130.86 223.44,130.58 224.42,130.8 225.4,131.53 226.38,132.73 227.36,134.38 228.34,136.44 229.32,138.85 230.3,141.54 231.28,144.44 232.26,147.48 233.24,150.57 234.22,153.63 235.2,156.58 236.18,159.33 237.16,161.82 238.14,163.97 239.12,165.73 240.1,167.05 241.08,167.9 242.06,168.25 243.04,168.1 244.02,167.44 245,166.3 245.98,164.7 246.96,162.69 247.94,160.33 248.92,157.67 249.9,154.79 250.88,151.77 251.86,148.68 252.84,145.61 253.82,142.65 254.8,139.86 255.78,137.34 256.76,135.14 257.74,133.32 258.72,131.94 259.7,131.02 260.68,130.61 261.66,130.69 262.64,131.29 263.62,132.37 264.6,133.9 265.58,135.86 266.56,138.18 267.54,140.8 268.52,143.66 269.5,146.67 270.48,149.75 271.46,152.83 272.44,155.81 273.42,158.62 274.4,161.19 275.38,163.43 276.36,165.3 277.34,166.75 278.32,167.72 279.3,168.21 280.28,168.19 281.26,167.66 282.24,166.65 283.22,165.17 284.2,163.26 285.18,160.99 286.16,158.4 287.14,155.57 288.12,152.58 289.1,149.5 290.08,146.42 291.06,143.42 292.04,140.58 293.02,137.98 294,135.69 294.98,133.76 295.96,132.26 296.94,131.22 297.92,130.67 298.9,130.62 299.88,131.08 300.86,132.03 301.84,133.45 302.82,135.3 303.8,137.53 304.78,140.08 305.76,142.88 306.74,145.86 307.72,148.93 308.7,152.02 309.68,155.03 310.66,157.9 311.64,160.53 312.62,162.87 313.6,164.85 314.58,166.41 315.56,167.51 316.54,168.13 317.52,168.24 318.5,167.85 319.48,166.96 320.46,165.6 321.44,163.81 322.42,161.62 323.4,159.11 324.38,156.34 325.36,153.38 326.34,150.32 327.32,147.23 328.3,144.2 329.28,141.31 330.26,138.64 331.24,136.26 332.22,134.23 333.2,132.61 334.18,131.45 335.16,130.77 336.14,130.58 337.12,130.91 338.1,131.73 339.08,133.03 340.06,134.77 341.04,136.91 342.02,139.38 343,142.12 343.98,145.06 344.96,148.11 345.94,151.2 346.92,154.24 347.9,157.16 348.88,159.86 349.86,162.28 350.84,164.36 351.82,166.04 352.8,167.27" stroke="#c4c4c4" stroke-width="0.7" fill="none" stroke-linejoin="round"/><polyline points="0,115.09 0.98,116.12 1.96,117.64 2.94,119.58 3.92,121.91 4.9,124.56 5.88,127.46 6.86,130.53 7.84,133.69 8.82,136.84 9.8,139.92 10.78,142.83 11.76,145.5 12.74,147.86 13.72,149.84 14.7,151.38 15.68,152.45 16.66,153.02 17.64,153.08 18.62,152.61 19.6,151.64 20.58,150.19 21.56,148.29 22.54,146.01 23.52,143.4 24.5,140.53 25.48,137.48 26.46,134.33 27.44,131.17 28.42,128.08 29.4,125.14 30.38,122.43 31.36,120.03 32.34,118 33.32,116.4 34.3,115.26 35.28,114.62 36.26,114.5 37.24,114.9 38.22,115.8 39.2,117.19 40.18,119.03 41.16,121.26 42.14,123.83 43.12,126.67 44.1,129.7 45.08,132.84 46.06,136.01 47.04,139.12 48.02,142.08 49,144.82 49.98,147.27 50.96,149.35 51.94,151.02 52.92,152.22 53.9,152.92 54.88,153.11 55.86,152.78 56.84,151.94 57.82,150.62 58.8,148.84 59.78,146.65 60.76,144.12 61.74,141.31 62.72,138.3 63.7,135.17 64.68,132 65.66,128.88 66.64,125.9 67.62,123.12 68.6,120.63 69.58,118.5 70.56,116.78 71.54,115.51 72.52,114.74 73.5,114.48 74.48,114.74 75.46,115.51 76.44,116.78 77.42,118.5 78.4,120.63 79.38,123.12 80.36,125.9 81.34,128.88 82.32,132 83.3,135.17 84.28,138.3 85.26,141.31 86.24,144.12 87.22,146.65 88.2,148.84 89.18,150.62 90.16,151.94 91.14,152.78 92.12,153.11 93.1,152.92 94.08,152.22 95.06,151.02 96.04,149.35 97.02,147.27 98,144.82 98.98,142.08 99.96,139.12 100.94,136.01 101.92,132.84 102.9,129.7 103.88,126.67 104.86,123.83 105.84,121.26 106.82,119.03 107.8,117.19 108.78,115.8 109.76,114.9 110.74,114.5 111.72,114.62 112.7,115.26 113.68,116.4 114.66,118 115.64,120.03 116.62,122.43 117.6,125.14 118.58,128.08 119.56,131.17 120.54,134.33 121.52,137.48 122.5,140.53 123.48,143.4 124.46,146.01 125.44,148.29 126.42,150.19 127.4,151.64 128.38,152.61 129.36,153.08 130.34,153.02 131.32,152.45 132.3,151.38 133.28,149.84 134.26,147.86 135.24,145.5 136.22,142.83 137.2,139.92 138.18,136.84 139.16,133.69 140.14,130.53 141.12,127.46 142.1,124.56 143.08,121.91 144.06,119.58 145.04,117.64 146.02,116.12 147,115.09 147.98,114.55 148.96,114.54 149.94,115.04 150.92,116.05 151.9,117.53 152.88,119.45 153.86,121.76 154.84,124.39 155.82,127.28 156.8,130.34 157.78,133.49 158.76,136.65 159.74,139.74 160.72,142.66 161.7,145.35 162.68,147.73 163.66,149.73 164.64,151.3 165.62,152.4 166.6,153 167.58,153.09 168.56,152.65 169.54,151.71 170.52,150.29 171.5,148.42 172.48,146.16 173.46,143.57 174.44,140.71 175.42,137.67 176.4,134.53 177.38,131.36 178.36,128.26 179.34,125.31 180.32,122.59 181.3,120.17 182.28,118.11 183.26,116.48 184.24,115.31 185.22,114.64 186.2,114.49 187.18,114.86 188.16,115.73 189.14,117.09 190.12,118.9 191.1,121.11 192.08,123.67 193.06,126.49 194.04,129.51 195.02,132.65 196,135.82 196.98,138.93 197.96,141.91 198.94,144.66 199.92,147.13 200.9,149.24 201.88,150.93 202.86,152.16 203.84,152.89 204.82,153.12 205.8,152.82 206.78,152.01 207.76,150.71 208.74,148.96 209.72,146.8 210.7,144.29 211.68,141.49 212.66,138.49 213.64,135.37 214.62,132.2 215.6,129.07 216.58,126.07 217.56,123.28 218.54,120.78 219.52,118.62 220.5,116.87 221.48,115.58 222.46,114.77 223.44,114.48 224.42,114.71 225.4,115.45 226.38,116.69 227.36,118.38 228.34,120.49 229.32,122.96 230.3,125.72 231.28,128.7 232.26,131.81 233.24,134.98 234.22,138.12 235.2,141.14 236.18,143.96 237.16,146.51 238.14,148.71 239.12,150.52 240.1,151.88 241.08,152.75 242.06,153.11 243.04,152.95 244.02,152.27 245,151.1 245.98,149.47 246.96,147.41 247.94,144.98 248.92,142.26 249.9,139.3 250.88,136.2 251.86,133.04 252.84,129.89 253.82,126.85 254.8,124 255.78,121.41 256.76,119.15 257.74,117.29 258.72,115.87 259.7,114.94 260.68,114.51 261.66,114.6 262.64,115.2 263.62,116.31 264.6,117.89 265.58,119.89 266.56,122.27 267.54,124.96 268.52,127.89 269.5,130.98 270.48,134.14 271.46,137.29 272.44,140.35 273.42,143.23 274.4,145.86 275.38,148.17 276.36,150.08 277.34,151.56 278.32,152.57 279.3,153.06 280.28,153.04 281.26,152.5 282.24,151.46 283.22,149.94 284.2,147.99 285.18,145.66 286.16,143.01 287.14,140.11 288.12,137.04 289.1,133.88 290.08,130.72 291.06,127.64 292.04,124.73 293.02,122.07 294,119.72 294.98,117.74 295.96,116.2 296.94,115.14 297.92,114.57 298.9,114.52 299.88,114.99 300.86,115.97 301.84,117.43 302.82,119.32 303.8,121.61 304.78,124.22 305.76,127.09 306.74,130.15 307.72,133.3 308.7,136.46 309.68,139.55 310.66,142.49 311.64,145.19 312.62,147.59 313.6,149.62 314.58,151.22 315.56,152.35 316.54,152.98 317.52,153.1 318.5,152.69 319.48,151.78 320.46,150.39 321.44,148.55 322.42,146.31 323.4,143.74 324.38,140.9 325.36,137.86 326.34,134.72 327.32,131.55 328.3,128.45 329.28,125.49 330.26,122.75 331.24,120.31 332.22,118.23 333.2,116.57 334.18,115.37 335.16,114.67 336.14,114.49 337.12,114.82 338.1,115.66 339.08,117 340.06,118.78 341.04,120.97 342.02,123.5 343,126.31 343.98,129.32 344.96,132.46 345.94,135.62 346.92,138.74 347.9,141.73 348.88,144.5 349.86,146.99 350.84,149.12 351.82,150.84 352.8,152.1" stroke="#3dbcae" stroke-width="0.7" fill="none" stroke-linejoin="round"/><polyline points="0,101.4 0.98,102.48 1.96,104.06 2.94,106.09 3.92,108.52 4.9,111.28 5.88,114.31 6.86,117.51 7.84,120.8 8.82,124.1 9.8,127.31 10.78,130.35 11.76,133.13 12.74,135.59 13.72,137.65 14.7,139.26 15.68,140.38 16.66,140.97 17.64,141.03 18.62,140.54 19.6,139.53 20.58,138.02 21.56,136.04 22.54,133.66 23.52,130.94 24.5,127.94 25.48,124.76 26.46,121.48 27.44,118.18 28.42,114.95 29.4,111.88 30.38,109.06 31.36,106.56 32.34,104.44 33.32,102.76 34.3,101.58 35.28,100.91 36.26,100.79 37.24,101.2 38.22,102.14 39.2,103.59 40.18,105.51 41.16,107.84 42.14,110.52 43.12,113.48 44.1,116.65 45.08,119.92 46.06,123.23 47.04,126.47 48.02,129.56 49,132.42 49.98,134.97 50.96,137.14 51.94,138.88 52.92,140.13 53.9,140.87 54.88,141.07 55.86,140.73 56.84,139.85 57.82,138.46 58.8,136.61 59.78,134.33 60.76,131.69 61.74,128.76 62.72,125.62 63.7,122.35 64.68,119.05 65.66,115.79 66.64,112.68 67.62,109.78 68.6,107.19 69.58,104.96 70.56,103.16 71.54,101.84 72.52,101.04 73.5,100.77 74.48,101.04 75.46,101.84 76.44,103.16 77.42,104.96 78.4,107.19 79.38,109.78 80.36,112.68 81.34,115.79 82.32,119.05 83.3,122.35 84.28,125.62 85.26,128.76 86.24,131.69 87.22,134.33 88.2,136.61 89.18,138.46 90.16,139.85 91.14,140.73 92.12,141.07 93.1,140.87 94.08,140.13 95.06,138.88 96.04,137.14 97.02,134.97 98,132.42 98.98,129.56 99.96,126.47 100.94,123.23 101.92,119.92 102.9,116.65 103.88,113.48 104.86,110.52 105.84,107.84 106.82,105.51 107.8,103.59 108.78,102.14 109.76,101.2 110.74,100.79 111.72,100.91 112.7,101.58 113.68,102.76 114.66,104.44 115.64,106.56 116.62,109.06 117.6,111.88 118.58,114.95 119.56,118.18 120.54,121.48 121.52,124.76 122.5,127.94 123.48,130.94 124.46,133.66 125.44,136.04 126.42,138.02 127.4,139.53 128.38,140.54 129.36,141.03 130.34,140.97 131.32,140.38 132.3,139.26 133.28,137.65 134.26,135.59 135.24,133.13 136.22,130.35 137.2,127.31 138.18,124.1 139.16,120.8 140.14,117.51 141.12,114.31 142.1,111.28 143.08,108.52 144.06,106.09 145.04,104.06 146.02,102.48 147,101.4 147.98,100.84 148.96,100.83 149.94,101.35 150.92,102.4 151.9,103.95 152.88,105.95 153.86,108.36 154.84,111.11 155.82,114.12 156.8,117.31 157.78,120.6 158.76,123.9 159.74,127.12 160.72,130.17 161.7,132.97 162.68,135.45 163.66,137.54 164.64,139.18 165.62,140.33 166.6,140.95 167.58,141.04 168.56,140.59 169.54,139.61 170.52,138.12 171.5,136.18 172.48,133.82 173.46,131.11 174.44,128.13 175.42,124.96 176.4,121.68 177.38,118.38 178.36,115.14 179.34,112.06 180.32,109.22 181.3,106.7 182.28,104.56 183.26,102.85 184.24,101.64 185.22,100.94 186.2,100.78 187.18,101.16 188.16,102.07 189.14,103.49 190.12,105.38 191.1,107.69 192.08,110.35 193.06,113.3 194.04,116.45 195.02,119.72 196,123.03 196.98,126.27 197.96,129.38 198.94,132.25 199.92,134.83 200.9,137.02 201.88,138.79 202.86,140.07 203.84,140.84 204.82,141.07 205.8,140.76 206.78,139.92 207.76,138.56 208.74,136.73 209.72,134.48 210.7,131.86 211.68,128.95 212.66,125.82 213.64,122.56 214.62,119.25 215.6,115.99 216.58,112.86 217.56,109.95 218.54,107.33 219.52,105.08 220.5,103.26 221.48,101.91 222.46,101.07 223.44,100.77 224.42,101.01 225.4,101.78 226.38,103.07 227.36,104.84 228.34,107.04 229.32,109.61 230.3,112.49 231.28,115.6 232.26,118.85 233.24,122.15 234.22,125.42 235.2,128.57 236.18,131.52 237.16,134.18 238.14,136.48 239.12,138.36 240.1,139.78 241.08,140.69 242.06,141.06 243.04,140.9 244.02,140.19 245,138.97 245.98,137.26 246.96,135.12 247.94,132.59 248.92,129.74 249.9,126.66 250.88,123.43 251.86,120.13 252.84,116.85 253.82,113.67 254.8,110.7 255.78,108 256.76,105.64 257.74,103.7 258.72,102.22 259.7,101.24 260.68,100.8 261.66,100.89 262.64,101.52 263.62,102.68 264.6,104.32 265.58,106.41 266.56,108.9 267.54,111.7 268.52,114.76 269.5,117.98 270.48,121.27 271.46,124.56 272.44,127.75 273.42,130.76 274.4,133.5 275.38,135.91 276.36,137.91 277.34,139.45 278.32,140.5 279.3,141.02 280.28,140.99 281.26,140.43 282.24,139.34 283.22,137.76 284.2,135.73 285.18,133.29 286.16,130.52 287.14,127.5 288.12,124.3 289.1,121 290.08,117.71 291.06,114.5 292.04,111.46 293.02,108.68 294,106.23 294.98,104.17 295.96,102.56 296.94,101.45 297.92,100.86 298.9,100.81 299.88,101.3 300.86,102.32 301.84,103.84 302.82,105.82 303.8,108.2 304.78,110.93 305.76,113.93 306.74,117.11 307.72,120.4 308.7,123.7 309.68,126.92 310.66,129.99 311.64,132.81 312.62,135.31 313.6,137.42 314.58,139.09 315.56,140.27 316.54,140.93 317.52,141.05 318.5,140.63 319.48,139.68 320.46,138.23 321.44,136.31 322.42,133.97 323.4,131.29 324.38,128.32 325.36,125.16 326.34,121.88 327.32,118.58 328.3,115.34 329.28,112.25 330.26,109.39 331.24,106.84 332.22,104.67 333.2,102.94 334.18,101.7 335.16,100.97 336.14,100.77 337.12,101.12 338.1,102 339.08,103.39 340.06,105.25 341.04,107.54 342.02,110.18 343,113.11 343.98,116.25 344.96,119.52 345.94,122.82 346.92,126.08 347.9,129.19 348.88,132.09 349.86,134.68 350.84,136.9 351.82,138.69 352.8,140.01" stroke="#d64fae" stroke-width="0.7" fill="none" stroke-linejoin="round"/><polyline points="0,85.29 0.98,86.34 1.96,87.88 2.94,89.87 3.92,92.24 4.9,94.94 5.88,97.89 6.86,101.01 7.84,104.23 8.82,107.45 9.8,110.58 10.78,113.55 11.76,116.27 12.74,118.66 13.72,120.68 14.7,122.25 15.68,123.34 16.66,123.92 17.64,123.98 18.62,123.5 19.6,122.51 20.58,121.04 21.56,119.11 22.54,116.78 23.52,114.12 24.5,111.2 25.48,108.1 26.46,104.89 27.44,101.67 28.42,98.51 29.4,95.52 30.38,92.77 31.36,90.32 32.34,88.25 33.32,86.62 34.3,85.46 35.28,84.81 36.26,84.69 37.24,85.09 38.22,86.01 39.2,87.43 40.18,89.3 41.16,91.57 42.14,94.19 43.12,97.09 44.1,100.17 45.08,103.37 46.06,106.6 47.04,109.76 48.02,112.78 49,115.57 49.98,118.06 50.96,120.18 51.94,121.88 52.92,123.1 53.9,123.82 54.88,124.02 55.86,123.68 56.84,122.83 57.82,121.47 58.8,119.66 59.78,117.44 60.76,114.86 61.74,112 62.72,108.93 63.7,105.74 64.68,102.52 65.66,99.34 66.64,96.3 67.62,93.47 68.6,90.93 69.58,88.76 70.56,87.01 71.54,85.72 72.52,84.93 73.5,84.67 74.48,84.93 75.46,85.72 76.44,87.01 77.42,88.76 78.4,90.93 79.38,93.47 80.36,96.3 81.34,99.34 82.32,102.52 83.3,105.74 84.28,108.93 85.26,112 86.24,114.86 87.22,117.44 88.2,119.66 89.18,121.47 90.16,122.83 91.14,123.68 92.12,124.02 93.1,123.82 94.08,123.1 95.06,121.88 96.04,120.18 97.02,118.06 98,115.57 98.98,112.78 99.96,109.76 100.94,106.6 101.92,103.37 102.9,100.17 103.88,97.09 104.86,94.19 105.84,91.57 106.82,89.3 107.8,87.43 108.78,86.01 109.76,85.09 110.74,84.69 111.72,84.81 112.7,85.46 113.68,86.62 114.66,88.25 115.64,90.32 116.62,92.77 117.6,95.52 118.58,98.51 119.56,101.67 120.54,104.89 121.52,108.1 122.5,111.2 123.48,114.12 124.46,116.78 125.44,119.11 126.42,121.04 127.4,122.51 128.38,123.5 129.36,123.98 130.34,123.92 131.32,123.34 132.3,122.25 133.28,120.68 134.26,118.66 135.24,116.27 136.22,113.55 137.2,110.58 138.18,107.45 139.16,104.23 140.14,101.01 141.12,97.89 142.1,94.94 143.08,92.24 144.06,89.87 145.04,87.88 146.02,86.34 147,85.29 147.98,84.74 148.96,84.73 149.94,85.24 150.92,86.26 151.9,87.77 152.88,89.73 153.86,92.08 154.84,94.76 155.82,97.7 156.8,100.82 157.78,104.03 158.76,107.25 159.74,110.39 160.72,113.37 161.7,116.11 162.68,118.53 163.66,120.57 164.64,122.17 165.62,123.29 166.6,123.9 167.58,123.99 168.56,123.55 169.54,122.59 170.52,121.14 171.5,119.24 172.48,116.94 173.46,114.3 174.44,111.39 175.42,108.29 176.4,105.09 177.38,101.86 178.36,98.7 179.34,95.7 180.32,92.93 181.3,90.46 182.28,88.37 183.26,86.7 184.24,85.52 185.22,84.84 186.2,84.68 187.18,85.05 188.16,85.94 189.14,87.33 190.12,89.17 191.1,91.42 192.08,94.02 193.06,96.9 194.04,99.98 195.02,103.17 196,106.4 196.98,109.57 197.96,112.6 198.94,115.41 199.92,117.92 200.9,120.07 201.88,121.79 202.86,123.04 203.84,123.79 204.82,124.02 205.8,123.72 206.78,122.89 207.76,121.57 208.74,119.78 209.72,117.58 210.7,115.03 211.68,112.18 212.66,109.13 213.64,105.94 214.62,102.71 215.6,99.53 216.58,96.48 217.56,93.63 218.54,91.08 219.52,88.88 220.5,87.1 221.48,85.78 222.46,84.97 223.44,84.67 224.42,84.9 225.4,85.66 226.38,86.91 227.36,88.64 228.34,90.79 229.32,93.3 230.3,96.12 231.28,99.15 232.26,102.32 233.24,105.55 234.22,108.74 235.2,111.82 236.18,114.69 237.16,117.29 238.14,119.54 239.12,121.38 240.1,122.76 241.08,123.64 242.06,124.01 243.04,123.85 244.02,123.16 245,121.97 245.98,120.3 246.96,118.2 247.94,115.74 248.92,112.96 249.9,109.95 250.88,106.79 251.86,103.57 252.84,100.37 253.82,97.27 254.8,94.36 255.78,91.73 256.76,89.43 257.74,87.53 258.72,86.09 259.7,85.13 260.68,84.7 261.66,84.79 262.64,85.41 263.62,86.53 264.6,88.14 265.58,90.18 266.56,92.61 267.54,95.34 268.52,98.33 269.5,101.47 270.48,104.69 271.46,107.9 272.44,111.02 273.42,113.95 274.4,116.63 275.38,118.98 276.36,120.93 277.34,122.44 278.32,123.46 279.3,123.96 280.28,123.94 281.26,123.39 282.24,122.33 283.22,120.79 284.2,118.8 285.18,116.42 286.16,113.72 287.14,110.77 288.12,107.64 289.1,104.43 290.08,101.21 291.06,98.08 292.04,95.11 293.02,92.4 294,90 294.98,87.99 295.96,86.42 296.94,85.34 297.92,84.76 298.9,84.71 299.88,85.19 300.86,86.19 301.84,87.67 302.82,89.6 303.8,91.93 304.78,94.59 305.76,97.52 306.74,100.62 307.72,103.83 308.7,107.05 309.68,110.2 310.66,113.2 311.64,115.95 312.62,118.39 313.6,120.45 314.58,122.08 315.56,123.24 316.54,123.88 317.52,124 318.5,123.59 319.48,122.66 320.46,121.24 321.44,119.37 322.42,117.09 323.4,114.47 324.38,111.57 325.36,108.48 326.34,105.28 327.32,102.06 328.3,98.89 329.28,95.88 330.26,93.09 331.24,90.6 332.22,88.48 333.2,86.79 334.18,85.58 335.16,84.86 336.14,84.67 337.12,85.01 338.1,85.87 339.08,87.23 340.06,89.05 341.04,91.28 342.02,93.86 343,96.72 343.98,99.79 344.96,102.98 345.94,106.2 346.92,109.38 347.9,112.42 348.88,115.25 349.86,117.78 350.84,119.95 351.82,121.7 352.8,122.98" stroke="#3a48c8" stroke-width="0.7" fill="none" stroke-linejoin="round"/><polyline points="0,72.89 0.98,73.97 1.96,75.54 2.94,77.56 3.92,79.97 4.9,82.72 5.88,85.73 6.86,88.91 7.84,92.18 8.82,95.46 9.8,98.65 10.78,101.67 11.76,104.44 12.74,106.88 13.72,108.93 14.7,110.53 15.68,111.64 16.66,112.24 17.64,112.29 18.62,111.81 19.6,110.8 20.58,109.3 21.56,107.33 22.54,104.97 23.52,102.26 24.5,99.28 25.48,96.12 26.46,92.85 27.44,89.57 28.42,86.36 29.4,83.32 30.38,80.51 31.36,78.02 32.34,75.92 33.32,74.25 34.3,73.07 35.28,72.41 36.26,72.28 37.24,72.7 38.22,73.64 39.2,75.08 40.18,76.98 41.16,79.3 42.14,81.96 43.12,84.91 44.1,88.05 45.08,91.31 46.06,94.59 47.04,97.82 48.02,100.89 49,103.73 49.98,106.27 50.96,108.43 51.94,110.15 52.92,111.4 53.9,112.13 54.88,112.33 55.86,111.99 56.84,111.12 57.82,109.74 58.8,107.9 59.78,105.63 60.76,103.01 61.74,100.09 62.72,96.97 63.7,93.72 64.68,90.44 65.66,87.2 66.64,84.1 67.62,81.23 68.6,78.65 69.58,76.43 70.56,74.65 71.54,73.34 72.52,72.53 73.5,72.27 74.48,72.53 75.46,73.34 76.44,74.65 77.42,76.43 78.4,78.65 79.38,81.23 80.36,84.1 81.34,87.2 82.32,90.44 83.3,93.72 84.28,96.97 85.26,100.09 86.24,103.01 87.22,105.63 88.2,107.9 89.18,109.74 90.16,111.12 91.14,111.99 92.12,112.33 93.1,112.13 94.08,111.4 95.06,110.15 96.04,108.43 97.02,106.27 98,103.73 98.98,100.89 99.96,97.82 100.94,94.59 101.92,91.31 102.9,88.05 103.88,84.91 104.86,81.96 105.84,79.3 106.82,76.98 107.8,75.08 108.78,73.64 109.76,72.7 110.74,72.28 111.72,72.41 112.7,73.07 113.68,74.25 114.66,75.92 115.64,78.02 116.62,80.51 117.6,83.32 118.58,86.36 119.56,89.57 120.54,92.85 121.52,96.12 122.5,99.28 123.48,102.26 124.46,104.97 125.44,107.33 126.42,109.3 127.4,110.8 128.38,111.81 129.36,112.29 130.34,112.24 131.32,111.64 132.3,110.53 133.28,108.93 134.26,106.88 135.24,104.44 136.22,101.67 137.2,98.65 138.18,95.46 139.16,92.18 140.14,88.91 141.12,85.73 142.1,82.72 143.08,79.97 144.06,77.56 145.04,75.54 146.02,73.97 147,72.89 147.98,72.34 148.96,72.32 149.94,72.85 150.92,73.89 151.9,75.43 152.88,77.42 153.86,79.82 154.84,82.55 155.82,85.54 156.8,88.71 157.78,91.98 158.76,95.26 159.74,98.46 160.72,101.49 161.7,104.28 162.68,106.74 163.66,108.82 164.64,110.45 165.62,111.59 166.6,112.21 167.58,112.3 168.56,111.85 169.54,110.88 170.52,109.4 171.5,107.47 172.48,105.12 173.46,102.43 174.44,99.47 175.42,96.32 176.4,93.05 177.38,89.77 178.36,86.56 179.34,83.5 180.32,80.67 181.3,78.16 182.28,76.03 183.26,74.34 184.24,73.13 185.22,72.44 186.2,72.28 187.18,72.66 188.16,73.56 189.14,74.97 190.12,76.85 191.1,79.15 192.08,81.79 193.06,84.72 194.04,87.86 195.02,91.11 196,94.39 196.98,97.62 197.96,100.71 198.94,103.57 199.92,106.12 200.9,108.31 201.88,110.06 202.86,111.34 203.84,112.1 204.82,112.33 205.8,112.02 206.78,111.19 207.76,109.84 208.74,108.02 209.72,105.78 210.7,103.18 211.68,100.28 212.66,97.17 213.64,93.93 214.62,90.64 215.6,87.4 216.58,84.29 217.56,81.4 218.54,78.79 219.52,76.56 220.5,74.74 221.48,73.4 222.46,72.57 223.44,72.27 224.42,72.5 225.4,73.27 226.38,74.55 227.36,76.31 228.34,78.5 229.32,81.06 230.3,83.92 231.28,87.01 232.26,90.24 233.24,93.52 234.22,96.78 235.2,99.91 236.18,102.84 237.16,105.48 238.14,107.77 239.12,109.64 240.1,111.05 241.08,111.95 242.06,112.32 243.04,112.16 244.02,111.46 245,110.24 245.98,108.55 246.96,106.41 247.94,103.9 248.92,101.07 249.9,98.01 250.88,94.79 251.86,91.51 252.84,88.25 253.82,85.1 254.8,82.14 255.78,79.45 256.76,77.11 257.74,75.18 258.72,73.71 259.7,72.74 260.68,72.29 261.66,72.39 262.64,73.02 263.62,74.17 264.6,75.8 265.58,77.88 266.56,80.35 267.54,83.14 268.52,86.17 269.5,89.37 270.48,92.65 271.46,95.92 272.44,99.09 273.42,102.08 274.4,104.81 275.38,107.2 276.36,109.19 277.34,110.72 278.32,111.76 279.3,112.28 280.28,112.25 281.26,111.7 282.24,110.62 283.22,109.04 284.2,107.02 285.18,104.6 286.16,101.85 287.14,98.84 288.12,95.66 289.1,92.38 290.08,89.11 291.06,85.92 292.04,82.9 293.02,80.13 294,77.7 294.98,75.65 295.96,74.05 296.94,72.95 297.92,72.36 298.9,72.31 299.88,72.8 300.86,73.81 301.84,75.32 302.82,77.29 303.8,79.66 304.78,82.37 305.76,85.35 306.74,88.51 307.72,91.78 308.7,95.06 309.68,98.27 310.66,101.31 311.64,104.12 312.62,106.6 313.6,108.7 314.58,110.36 315.56,111.54 316.54,112.19 317.52,112.31 318.5,111.9 319.48,110.95 320.46,109.51 321.44,107.6 322.42,105.28 323.4,102.61 324.38,99.66 325.36,96.51 326.34,93.26 327.32,89.97 328.3,86.75 329.28,83.68 330.26,80.84 331.24,78.31 332.22,76.15 333.2,74.43 334.18,73.19 335.16,72.46 336.14,72.27 337.12,72.62 338.1,73.49 339.08,74.87 340.06,76.72 341.04,78.99 342.02,81.62 343,84.54 343.98,87.66 344.96,90.91 345.94,94.19 346.92,97.43 347.9,100.52 348.88,103.4 349.86,105.98 350.84,108.19 351.82,109.97 352.8,111.27" stroke="#d8a624" stroke-width="0.7" fill="none" stroke-linejoin="round"/><polyline points="0,65.25 0.98,65.7 1.96,66.36 2.94,67.2 3.92,68.2 4.9,69.35 5.88,70.6 6.86,71.93 7.84,73.29 8.82,74.65 9.8,75.98 10.78,77.24 11.76,78.4 12.74,79.41 13.72,80.27 14.7,80.94 15.68,81.4 16.66,81.65 17.64,81.67 18.62,81.47 19.6,81.05 20.58,80.42 21.56,79.6 22.54,78.62 23.52,77.49 24.5,76.25 25.48,74.93 26.46,73.57 27.44,72.2 28.42,70.87 29.4,69.6 30.38,68.43 31.36,67.39 32.34,66.51 33.32,65.82 34.3,65.33 35.28,65.05 36.26,65 37.24,65.17 38.22,65.56 39.2,66.16 40.18,66.96 41.16,67.92 42.14,69.03 43.12,70.26 44.1,71.57 45.08,72.93 46.06,74.29 47.04,75.64 48.02,76.92 49,78.1 49.98,79.16 50.96,80.06 51.94,80.78 52.92,81.3 53.9,81.6 54.88,81.68 55.86,81.54 56.84,81.18 57.82,80.61 58.8,79.84 59.78,78.89 60.76,77.8 61.74,76.59 62.72,75.29 63.7,73.93 64.68,72.56 65.66,71.22 66.64,69.92 67.62,68.73 68.6,67.65 69.58,66.73 70.56,65.98 71.54,65.44 72.52,65.1 73.5,64.99 74.48,65.1 75.46,65.44 76.44,65.98 77.42,66.73 78.4,67.65 79.38,68.73 80.36,69.92 81.34,71.22 82.32,72.56 83.3,73.93 84.28,75.29 85.26,76.59 86.24,77.8 87.22,78.89 88.2,79.84 89.18,80.61 90.16,81.18 91.14,81.54 92.12,81.68 93.1,81.6 94.08,81.3 95.06,80.78 96.04,80.06 97.02,79.16 98,78.1 98.98,76.92 99.96,75.64 100.94,74.29 101.92,72.93 102.9,71.57 103.88,70.26 104.86,69.03 105.84,67.92 106.82,66.96 107.8,66.16 108.78,65.56 109.76,65.17 110.74,65 111.72,65.05 112.7,65.33 113.68,65.82 114.66,66.51 115.64,67.39 116.62,68.43 117.6,69.6 118.58,70.87 119.56,72.2 120.54,73.57 121.52,74.93 122.5,76.25 123.48,77.49 124.46,78.62 125.44,79.6 126.42,80.42 127.4,81.05 128.38,81.47 129.36,81.67 130.34,81.65 131.32,81.4 132.3,80.94 133.28,80.27 134.26,79.41 135.24,78.4 136.22,77.24 137.2,75.98 138.18,74.65 139.16,73.29 140.14,71.93 141.12,70.6 142.1,69.35 143.08,68.2 144.06,67.2 145.04,66.36 146.02,65.7 147,65.25 147.98,65.02 148.96,65.02 149.94,65.23 150.92,65.67 151.9,66.31 152.88,67.14 153.86,68.14 154.84,69.27 155.82,70.52 156.8,71.84 157.78,73.21 158.76,74.57 159.74,75.9 160.72,77.17 161.7,78.33 162.68,79.36 163.66,80.22 164.64,80.9 165.62,81.38 166.6,81.64 167.58,81.67 168.56,81.49 169.54,81.08 170.52,80.46 171.5,79.66 172.48,78.68 173.46,77.56 174.44,76.33 175.42,75.01 176.4,73.65 177.38,72.29 178.36,70.95 179.34,69.67 180.32,68.49 181.3,67.45 182.28,66.56 183.26,65.86 184.24,65.35 185.22,65.06 186.2,65 187.18,65.15 188.16,65.53 189.14,66.12 190.12,66.9 191.1,67.86 192.08,68.96 193.06,70.18 194.04,71.49 195.02,72.84 196,74.21 196.98,75.56 197.96,76.84 198.94,78.03 199.92,79.1 200.9,80.01 201.88,80.74 202.86,81.27 203.84,81.59 204.82,81.69 205.8,81.56 206.78,81.21 207.76,80.65 208.74,79.89 209.72,78.96 210.7,77.87 211.68,76.66 212.66,75.37 213.64,74.02 214.62,72.65 215.6,71.3 216.58,70 217.56,68.8 218.54,67.71 219.52,66.78 220.5,66.02 221.48,65.46 222.46,65.12 223.44,64.99 224.42,65.09 225.4,65.41 226.38,65.94 227.36,66.68 228.34,67.59 229.32,68.66 230.3,69.85 231.28,71.13 232.26,72.48 233.24,73.85 234.22,75.2 235.2,76.51 236.18,77.73 237.16,78.83 238.14,79.78 239.12,80.56 240.1,81.15 241.08,81.53 242.06,81.68 243.04,81.61 244.02,81.32 245,80.82 245.98,80.11 246.96,79.22 247.94,78.17 248.92,76.99 249.9,75.72 250.88,74.38 251.86,73.01 252.84,71.65 253.82,70.34 254.8,69.1 255.78,67.99 256.76,67.01 257.74,66.21 258.72,65.59 259.7,65.19 260.68,65 261.66,65.04 262.64,65.3 263.62,65.78 264.6,66.46 265.58,67.33 266.56,68.36 267.54,69.52 268.52,70.79 269.5,72.12 270.48,73.49 271.46,74.85 272.44,76.17 273.42,77.42 274.4,78.55 275.38,79.55 276.36,80.38 277.34,81.01 278.32,81.45 279.3,81.66 280.28,81.65 281.26,81.42 282.24,80.97 283.22,80.31 284.2,79.47 285.18,78.46 286.16,77.32 287.14,76.06 288.12,74.74 289.1,73.37 290.08,72.01 291.06,70.68 292.04,69.42 293.02,68.27 294,67.25 294.98,66.4 295.96,65.74 296.94,65.27 297.92,65.03 298.9,65.01 299.88,65.21 300.86,65.64 301.84,66.26 302.82,67.08 303.8,68.07 304.78,69.2 305.76,70.44 306.74,71.76 307.72,73.12 308.7,74.49 309.68,75.82 310.66,77.09 311.64,78.26 312.62,79.3 313.6,80.17 314.58,80.86 315.56,81.35 316.54,81.63 317.52,81.68 318.5,81.5 319.48,81.11 320.46,80.51 321.44,79.71 322.42,78.75 323.4,77.63 324.38,76.41 325.36,75.09 326.34,73.74 327.32,72.37 328.3,71.03 329.28,69.75 330.26,68.56 331.24,67.51 332.22,66.61 333.2,65.89 334.18,65.38 335.16,65.07 336.14,64.99 337.12,65.14 338.1,65.5 339.08,66.08 340.06,66.85 341.04,67.79 342.02,68.89 343,70.1 343.98,71.41 344.96,72.76 345.94,74.13 346.92,75.48 347.9,76.77 348.88,77.96 349.86,79.04 350.84,79.96 351.82,80.7 352.8,81.24" stroke="#24d824" stroke-width="0.7" fill="none" stroke-linejoin="round"/><polyline points="0,53.59 0.98,54.68 1.96,56.28 2.94,58.33 3.92,60.79 4.9,63.59 5.88,66.65 6.86,69.89 7.84,73.22 8.82,76.55 9.8,79.8 10.78,82.88 11.76,85.69 12.74,88.18 13.72,90.27 14.7,91.9 15.68,93.03 16.66,93.63 17.64,93.69 18.62,93.2 19.6,92.17 20.58,90.64 21.56,88.64 22.54,86.23 23.52,83.48 24.5,80.45 25.48,77.23 26.46,73.9 27.44,70.56 28.42,67.3 29.4,64.2 30.38,61.34 31.36,58.81 32.34,56.66 33.32,54.97 34.3,53.77 35.28,53.1 36.26,52.97 37.24,53.39 38.22,54.34 39.2,55.81 40.18,57.75 41.16,60.11 42.14,62.82 43.12,65.82 44.1,69.02 45.08,72.33 46.06,75.67 47.04,78.95 48.02,82.08 49,84.98 49.98,87.56 50.96,89.76 51.94,91.51 52.92,92.78 53.9,93.52 54.88,93.73 55.86,93.38 56.84,92.49 57.82,91.09 58.8,89.21 59.78,86.91 60.76,84.24 61.74,81.27 62.72,78.09 63.7,74.79 64.68,71.45 65.66,68.15 66.64,65 67.62,62.07 68.6,59.44 69.58,57.19 70.56,55.37 71.54,54.04 72.52,53.22 73.5,52.95 74.48,53.22 75.46,54.04 76.44,55.37 77.42,57.19 78.4,59.44 79.38,62.07 80.36,65 81.34,68.15 82.32,71.45 83.3,74.79 84.28,78.09 85.26,81.27 86.24,84.24 87.22,86.91 88.2,89.21 89.18,91.09 90.16,92.49 91.14,93.38 92.12,93.73 93.1,93.52 94.08,92.78 95.06,91.51 96.04,89.76 97.02,87.56 98,84.98 98.98,82.08 99.96,78.95 100.94,75.67 101.92,72.33 102.9,69.02 103.88,65.82 104.86,62.82 105.84,60.11 106.82,57.75 107.8,55.81 108.78,54.34 109.76,53.39 110.74,52.97 111.72,53.1 112.7,53.77 113.68,54.97 114.66,56.66 115.64,58.81 116.62,61.34 117.6,64.2 118.58,67.3 119.56,70.56 120.54,73.9 121.52,77.23 122.5,80.45 123.48,83.48 124.46,86.23 125.44,88.64 126.42,90.64 127.4,92.17 128.38,93.2 129.36,93.69 130.34,93.63 131.32,93.03 132.3,91.9 133.28,90.27 134.26,88.18 135.24,85.69 136.22,82.88 137.2,79.8 138.18,76.55 139.16,73.22 140.14,69.89 141.12,66.65 142.1,63.59 143.08,60.79 144.06,58.33 145.04,56.28 146.02,54.68 147,53.59 147.98,53.02 148.96,53.01 149.94,53.54 150.92,54.6 151.9,56.17 152.88,58.2 153.86,60.63 154.84,63.41 155.82,66.46 156.8,69.69 157.78,73.01 158.76,76.35 159.74,79.61 160.72,82.7 161.7,85.53 162.68,88.04 163.66,90.15 164.64,91.81 165.62,92.97 166.6,93.61 167.58,93.7 168.56,93.24 169.54,92.25 170.52,90.75 171.5,88.78 172.48,86.39 173.46,83.65 174.44,80.64 175.42,77.43 176.4,74.11 177.38,70.77 178.36,67.49 179.34,64.38 180.32,61.51 181.3,58.95 182.28,56.78 183.26,55.06 184.24,53.83 185.22,53.12 186.2,52.96 187.18,53.34 188.16,54.27 189.14,55.7 190.12,57.62 191.1,59.95 192.08,62.64 193.06,65.63 194.04,68.82 195.02,72.13 196,75.47 196.98,78.76 197.96,81.9 198.94,84.81 199.92,87.41 200.9,89.63 201.88,91.42 202.86,92.72 203.84,93.49 204.82,93.73 205.8,93.42 206.78,92.56 207.76,91.19 208.74,89.34 209.72,87.06 210.7,84.41 211.68,81.46 212.66,78.29 213.64,74.99 214.62,71.65 215.6,68.35 216.58,65.19 217.56,62.24 218.54,59.59 219.52,57.32 220.5,55.47 221.48,54.1 222.46,53.26 223.44,52.95 224.42,53.19 225.4,53.97 226.38,55.28 227.36,57.07 228.34,59.29 229.32,61.9 230.3,64.81 231.28,67.95 232.26,71.24 233.24,74.59 234.22,77.9 235.2,81.08 236.18,84.06 237.16,86.75 238.14,89.08 239.12,90.99 240.1,92.42 241.08,93.34 242.06,93.72 243.04,93.55 244.02,92.84 245,91.6 245.98,89.88 246.96,87.7 247.94,85.14 248.92,82.27 249.9,79.15 250.88,75.88 251.86,72.54 252.84,69.22 253.82,66.01 254.8,63 255.78,60.26 256.76,57.88 257.74,55.91 258.72,54.42 259.7,53.43 260.68,52.98 261.66,53.07 262.64,53.71 263.62,54.88 264.6,56.55 265.58,58.66 266.56,61.17 267.54,64.01 268.52,67.1 269.5,70.36 270.48,73.7 271.46,77.03 272.44,80.25 273.42,83.3 274.4,86.07 275.38,88.5 276.36,90.53 277.34,92.09 278.32,93.15 279.3,93.67 280.28,93.65 281.26,93.08 282.24,91.98 283.22,90.38 284.2,88.32 285.18,85.86 286.16,83.06 287.14,80 288.12,76.76 289.1,73.42 290.08,70.09 291.06,66.84 292.04,63.77 293.02,60.96 294,58.47 294.98,56.39 295.96,54.77 296.94,53.64 297.92,53.04 298.9,52.99 299.88,53.49 300.86,54.52 301.84,56.06 302.82,58.06 303.8,60.47 304.78,63.23 305.76,66.26 306.74,69.48 307.72,72.81 308.7,76.15 309.68,79.41 310.66,82.51 311.64,85.37 312.62,87.9 313.6,90.03 314.58,91.72 315.56,92.92 316.54,93.59 317.52,93.71 318.5,93.28 319.48,92.32 320.46,90.85 321.44,88.91 322.42,86.55 323.4,83.83 324.38,80.83 325.36,77.63 326.34,74.31 327.32,70.97 328.3,67.69 329.28,64.56 330.26,61.67 331.24,59.1 332.22,56.9 333.2,55.15 334.18,53.89 335.16,53.15 336.14,52.95 337.12,53.3 338.1,54.2 339.08,55.6 340.06,57.49 341.04,59.8 342.02,62.47 343,65.44 343.98,68.62 344.96,71.92 345.94,75.27 346.92,78.56 347.9,81.71 348.88,84.64 349.86,87.26 350.84,89.51 351.82,91.32 352.8,92.65" stroke="#b45ad6" stroke-width="0.7" fill="none" stroke-linejoin="round"/><polyline points="0,48.66 0.98,49.69 1.96,51.18 2.94,53.11 3.92,55.42 4.9,58.05 5.88,60.92 6.86,63.96 7.84,67.09 8.82,70.22 9.8,73.26 10.78,76.15 11.76,78.79 12.74,81.13 13.72,83.09 14.7,84.62 15.68,85.68 16.66,86.24 17.64,86.3 18.62,85.83 19.6,84.87 20.58,83.43 21.56,81.56 22.54,79.3 23.52,76.71 24.5,73.87 25.48,70.85 26.46,67.73 27.44,64.59 28.42,61.53 29.4,58.62 30.38,55.93 31.36,53.56 32.34,51.55 33.32,49.96 34.3,48.83 35.28,48.2 36.26,48.08 37.24,48.47 38.22,49.37 39.2,50.74 40.18,52.56 41.16,54.78 42.14,57.32 43.12,60.14 44.1,63.14 45.08,66.25 46.06,69.39 47.04,72.47 48.02,75.4 49,78.12 49.98,80.54 50.96,82.61 51.94,84.25 52.92,85.44 53.9,86.14 54.88,86.33 55.86,86.01 56.84,85.18 57.82,83.86 58.8,82.1 59.78,79.93 60.76,77.43 61.74,74.64 62.72,71.66 63.7,68.56 64.68,65.42 65.66,62.33 66.64,59.37 67.62,56.62 68.6,54.15 69.58,52.04 70.56,50.33 71.54,49.08 72.52,48.32 73.5,48.06 74.48,48.32 75.46,49.08 76.44,50.33 77.42,52.04 78.4,54.15 79.38,56.62 80.36,59.37 81.34,62.33 82.32,65.42 83.3,68.56 84.28,71.66 85.26,74.64 86.24,77.43 87.22,79.93 88.2,82.1 89.18,83.86 90.16,85.18 91.14,86.01 92.12,86.33 93.1,86.14 94.08,85.44 95.06,84.25 96.04,82.61 97.02,80.54 98,78.12 98.98,75.4 99.96,72.47 100.94,69.39 101.92,66.25 102.9,63.14 103.88,60.14 104.86,57.32 105.84,54.78 106.82,52.56 107.8,50.74 108.78,49.37 109.76,48.47 110.74,48.08 111.72,48.2 112.7,48.83 113.68,49.96 114.66,51.55 115.64,53.56 116.62,55.93 117.6,58.62 118.58,61.53 119.56,64.59 120.54,67.73 121.52,70.85 122.5,73.87 123.48,76.71 124.46,79.3 125.44,81.56 126.42,83.43 127.4,84.87 128.38,85.83 129.36,86.3 130.34,86.24 131.32,85.68 132.3,84.62 133.28,83.09 134.26,81.13 135.24,78.79 136.22,76.15 137.2,73.26 138.18,70.22 139.16,67.09 140.14,63.96 141.12,60.92 142.1,58.05 143.08,55.42 144.06,53.11 145.04,51.18 146.02,49.69 147,48.66 147.98,48.13 148.96,48.11 149.94,48.61 150.92,49.61 151.9,51.08 152.88,52.98 153.86,55.27 154.84,57.88 155.82,60.74 156.8,63.77 157.78,66.89 158.76,70.03 159.74,73.08 160.72,75.98 161.7,78.64 162.68,80.99 163.66,82.98 164.64,84.54 165.62,85.63 166.6,86.22 167.58,86.31 168.56,85.88 169.54,84.95 170.52,83.54 171.5,81.69 172.48,79.45 173.46,76.88 174.44,74.05 175.42,71.04 176.4,67.92 177.38,64.78 178.36,61.71 179.34,58.79 180.32,56.09 181.3,53.69 182.28,51.66 183.26,50.04 184.24,48.88 185.22,48.22 186.2,48.07 187.18,48.43 188.16,49.3 189.14,50.65 190.12,52.44 191.1,54.63 192.08,57.16 193.06,59.96 194.04,62.95 195.02,66.06 196,69.2 196.98,72.28 197.96,75.23 198.94,77.96 199.92,80.4 200.9,82.49 201.88,84.17 202.86,85.39 203.84,86.11 204.82,86.34 205.8,86.04 206.78,85.24 207.76,83.95 208.74,82.22 209.72,80.08 210.7,77.59 211.68,74.82 212.66,71.85 213.64,68.75 214.62,65.61 215.6,62.52 216.58,59.54 217.56,56.78 218.54,54.3 219.52,52.16 220.5,50.43 221.48,49.14 222.46,48.35 223.44,48.06 224.42,48.28 225.4,49.02 226.38,50.24 227.36,51.92 228.34,54.01 229.32,56.46 230.3,59.19 231.28,62.14 232.26,65.23 233.24,68.37 234.22,71.47 235.2,74.47 236.18,77.26 237.16,79.79 238.14,81.98 239.12,83.76 240.1,85.11 241.08,85.97 242.06,86.33 243.04,86.17 244.02,85.5 245,84.34 245.98,82.72 246.96,80.68 247.94,78.28 248.92,75.58 249.9,72.65 250.88,69.58 251.86,66.44 252.84,63.33 253.82,60.32 254.8,57.49 255.78,54.92 256.76,52.69 257.74,50.84 258.72,49.44 259.7,48.51 260.68,48.09 261.66,48.17 262.64,48.78 263.62,49.87 264.6,51.44 265.58,53.42 266.56,55.78 267.54,58.44 268.52,61.34 269.5,64.4 270.48,67.53 271.46,70.66 272.44,73.69 273.42,76.54 274.4,79.15 275.38,81.43 276.36,83.33 277.34,84.8 278.32,85.79 279.3,86.28 280.28,86.26 281.26,85.73 282.24,84.7 283.22,83.19 284.2,81.26 285.18,78.95 286.16,76.32 287.14,73.45 288.12,70.41 289.1,67.28 290.08,64.15 291.06,61.1 292.04,58.22 293.02,55.57 294,53.25 294.98,51.29 295.96,49.77 296.94,48.71 297.92,48.15 298.9,48.1 299.88,48.57 300.86,49.53 301.84,50.98 302.82,52.86 303.8,55.12 304.78,57.71 305.76,60.56 306.74,63.58 307.72,66.7 308.7,69.83 309.68,72.9 310.66,75.81 311.64,78.49 312.62,80.86 313.6,82.87 314.58,84.45 315.56,85.57 316.54,86.2 317.52,86.32 318.5,85.92 319.48,85.02 320.46,83.63 321.44,81.81 322.42,79.59 323.4,77.04 324.38,74.23 325.36,71.22 326.34,68.11 327.32,64.97 328.3,61.9 329.28,58.96 330.26,56.25 331.24,53.83 332.22,51.77 333.2,50.13 334.18,48.94 335.16,48.25 336.14,48.06 337.12,48.39 338.1,49.23 339.08,50.55 340.06,52.32 341.04,54.49 342.02,57 343,59.78 343.98,62.76 344.96,65.87 345.94,69.01 346.92,72.1 347.9,75.06 348.88,77.8 349.86,80.26 350.84,82.37 351.82,84.08 352.8,85.32" stroke="#a8b444" stroke-width="0.7" fill="none" stroke-linejoin="round"/><path d="M0 59.62H352.8" stroke="#d83c50" stroke-width="0.7" fill="none"/><path d="M0 38.16H352.8" stroke="#587a3a" stroke-width="1.2" fill="none"/><polyline points="0,6.71 0.98,7.99 1.96,9.86 2.94,12.26 3.92,15.14 4.9,18.41 5.88,21.99 6.86,25.78 7.84,29.67 8.82,33.57 9.8,37.37 10.78,40.97 11.76,44.26 12.74,47.17 13.72,49.61 14.7,51.52 15.68,52.84 16.66,53.55 17.64,53.61 18.62,53.04 19.6,51.84 20.58,50.05 21.56,47.71 22.54,44.89 23.52,41.67 24.5,38.13 25.48,34.36 26.46,30.47 27.44,26.57 28.42,22.75 29.4,19.12 30.38,15.78 31.36,12.81 32.34,10.31 33.32,8.33 34.3,6.92 35.28,6.14 36.26,5.99 37.24,6.48 38.22,7.59 39.2,9.31 40.18,11.58 41.16,14.33 42.14,17.51 43.12,21.01 44.1,24.76 45.08,28.63 46.06,32.54 47.04,36.38 48.02,40.04 49,43.42 49.98,46.44 50.96,49.01 51.94,51.07 52.92,52.55 53.9,53.42 54.88,53.66 55.86,53.25 56.84,52.22 57.82,50.58 58.8,48.38 59.78,45.68 60.76,42.56 61.74,39.09 62.72,35.38 63.7,31.51 64.68,27.6 65.66,23.75 66.64,20.06 67.62,16.63 68.6,13.56 69.58,10.92 70.56,8.8 71.54,7.24 72.52,6.28 73.5,5.96 74.48,6.28 75.46,7.24 76.44,8.8 77.42,10.92 78.4,13.56 79.38,16.63 80.36,20.06 81.34,23.75 82.32,27.6 83.3,31.51 84.28,35.38 85.26,39.09 86.24,42.56 87.22,45.68 88.2,48.38 89.18,50.58 90.16,52.22 91.14,53.25 92.12,53.66 93.1,53.42 94.08,52.55 95.06,51.07 96.04,49.01 97.02,46.44 98,43.42 98.98,40.04 99.96,36.38 100.94,32.54 101.92,28.63 102.9,24.76 103.88,21.01 104.86,17.51 105.84,14.33 106.82,11.58 107.8,9.31 108.78,7.59 109.76,6.48 110.74,5.99 111.72,6.14 112.7,6.92 113.68,8.33 114.66,10.31 115.64,12.81 116.62,15.78 117.6,19.12 118.58,22.75 119.56,26.57 120.54,30.47 121.52,34.36 122.5,38.13 123.48,41.67 124.46,44.89 125.44,47.71 126.42,50.05 127.4,51.84 128.38,53.04 129.36,53.61 130.34,53.55 131.32,52.84 132.3,51.52 133.28,49.61 134.26,47.17 135.24,44.26 136.22,40.97 137.2,37.37 138.18,33.57 139.16,29.67 140.14,25.78 141.12,21.99 142.1,18.41 143.08,15.14 144.06,12.26 145.04,9.86 146.02,7.99 147,6.71 147.98,6.05 148.96,6.03 149.94,6.65 150.92,7.9 151.9,9.73 152.88,12.1 153.86,14.95 154.84,18.2 155.82,21.76 156.8,25.54 157.78,29.43 158.76,33.34 159.74,37.14 160.72,40.76 161.7,44.07 162.68,47.01 163.66,49.48 164.64,51.42 165.62,52.78 166.6,53.52 167.58,53.63 168.56,53.09 169.54,51.93 170.52,50.17 171.5,47.87 172.48,45.08 173.46,41.88 174.44,38.35 175.42,34.6 176.4,30.71 177.38,26.8 178.36,22.98 179.34,19.33 180.32,15.97 181.3,12.98 182.28,10.45 183.26,8.43 184.24,6.99 185.22,6.17 186.2,5.98 187.18,6.43 188.16,7.51 189.14,9.19 190.12,11.42 191.1,14.15 192.08,17.3 193.06,20.79 194.04,24.52 195.02,28.39 196,32.31 196.98,36.15 197.96,39.82 198.94,43.23 199.92,46.27 200.9,48.87 201.88,50.96 202.86,52.48 203.84,53.39 204.82,53.66 205.8,53.29 206.78,52.3 207.76,50.69 208.74,48.53 209.72,45.86 210.7,42.76 211.68,39.31 212.66,35.61 213.64,31.75 214.62,27.84 215.6,23.98 216.58,20.28 217.56,16.83 218.54,13.74 219.52,11.07 220.5,8.91 221.48,7.32 222.46,6.32 223.44,5.96 224.42,6.25 225.4,7.16 226.38,8.69 227.36,10.78 228.34,13.38 229.32,16.43 230.3,19.84 231.28,23.51 232.26,27.36 233.24,31.27 234.22,35.14 235.2,38.87 236.18,42.35 237.16,45.5 238.14,48.23 239.12,50.46 240.1,52.13 241.08,53.21 242.06,53.65 243.04,53.45 244.02,52.62 245,51.18 245.98,49.15 246.96,46.61 247.94,43.62 248.92,40.26 249.9,36.61 250.88,32.78 251.86,28.87 252.84,24.99 253.82,21.24 254.8,17.71 255.78,14.52 256.76,11.73 257.74,9.43 258.72,7.68 259.7,6.53 260.68,6 261.66,6.11 262.64,6.86 263.62,8.22 264.6,10.17 265.58,12.65 266.56,15.58 267.54,18.9 268.52,22.52 269.5,26.33 270.48,30.23 271.46,34.12 272.44,37.9 273.42,41.46 274.4,44.71 275.38,47.55 276.36,49.92 277.34,51.74 278.32,52.98 279.3,53.59 280.28,53.57 281.26,52.9 282.24,51.62 283.22,49.74 284.2,47.33 285.18,44.45 286.16,41.18 287.14,37.6 288.12,33.81 289.1,29.91 290.08,26.01 291.06,22.21 292.04,18.62 293.02,15.33 294,12.43 294.98,9.99 295.96,8.09 296.94,6.77 297.92,6.08 298.9,6.02 299.88,6.6 300.86,7.8 301.84,9.6 302.82,11.94 303.8,14.76 304.78,17.99 305.76,21.54 306.74,25.3 307.72,29.19 308.7,33.1 309.68,36.92 310.66,40.54 311.64,43.88 312.62,46.84 313.6,49.34 314.58,51.32 315.56,52.71 316.54,53.49 317.52,53.64 318.5,53.14 319.48,52.02 320.46,50.3 321.44,48.02 322.42,45.26 323.4,42.08 324.38,38.57 325.36,34.83 326.34,30.95 327.32,27.04 328.3,23.21 329.28,19.55 330.26,16.17 331.24,13.15 332.22,10.59 333.2,8.54 334.18,7.06 335.16,6.2 336.14,5.97 337.12,6.38 338.1,7.42 339.08,9.07 340.06,11.27 341.04,13.97 342.02,17.1 343,20.57 343.98,24.29 344.96,28.16 345.94,32.07 346.92,35.92 347.9,39.6 348.88,43.03 349.86,46.1 350.84,48.72 351.82,50.85 352.8,52.4" stroke="#d0d0d0" stroke-width="0.7" fill="none" stroke-linejoin="round"/></svg>
<svg style="left:393.6px;top:457.6px" width="1584.8" height="872.8" viewBox="0 0 396.2 218.2"><g stroke="#4a4a4a" stroke-width="0.65" fill="none"><path d="M27 5.4H30M27 17.32H30M27 29.25H30M27 41.17H30M27 53.1H30M27 65.03H30M27 76.95H30M27 88.88H30M27 100.8H30M27 112.72H30M27 124.65H30M27 136.58H30M27 148.5H30M27 160.42H30M27 172.35H30M27 184.28H30M27 196.2H30M30.4 196.8V199.8M48.04 196.8V199.8M65.68 196.8V199.8M83.32 196.8V199.8M100.96 196.8V199.8M118.6 196.8V199.8M136.24 196.8V199.8M153.88 196.8V199.8M171.52 196.8V199.8M189.16 196.8V199.8M206.8 196.8V199.8M224.44 196.8V199.8M242.08 196.8V199.8M259.72 196.8V199.8M277.36 196.8V199.8M295 196.8V199.8M312.64 196.8V199.8M330.28 196.8V199.8M347.92 196.8V199.8M365.56 196.8V199.8M383.2 196.8V199.8"/></g></svg>
<div class="t" style="left:454.43px;top:458.86px;width:42.37px;height:43.88px;line-height:43.88px;font-size:27.6px;color:#202020;text-align:right;transform:rotate(0.2deg) scaleX(0.876);transform-origin:100% 50%;">5.0</div>
<div class="t" style="left:454.43px;top:506.56px;width:42.37px;height:43.88px;line-height:43.88px;font-size:27.6px;color:#202020;text-align:right;transform:rotate(0.2deg) scaleX(0.876);transform-origin:100% 50%;">4.0</div>
<div class="t" style="left:454.43px;top:554.26px;width:42.37px;height:43.88px;line-height:43.88px;font-size:27.6px;color:#202020;text-align:right;transform:rotate(0.2deg) scaleX(0.876);transform-origin:100% 50%;">3.0</div>
<div class="t" style="left:454.43px;top:601.96px;width:42.37px;height:43.88px;line-height:43.88px;font-size:27.6px;color:#202020;text-align:right;transform:rotate(0.2deg) scaleX(0.876);transform-origin:100% 50%;">2.0</div>
<div class="t" style="left:454.43px;top:649.66px;width:42.37px;height:43.88px;line-height:43.88px;font-size:27.6px;color:#202020;text-align:right;transform:rotate(0.2deg) scaleX(0.876);transform-origin:100% 50%;">1.0</div>
<div class="t" style="left:454.43px;top:697.36px;width:42.37px;height:43.88px;line-height:43.88px;font-size:27.6px;color:#202020;text-align:right;transform:rotate(0.2deg) scaleX(0.876);transform-origin:100% 50%;">0.0</div>
<div class="t" style="left:445.24px;top:745.06px;width:51.56px;height:43.88px;line-height:43.88px;font-size:27.6px;color:#202020;text-align:right;transform:rotate(0.2deg) scaleX(0.875);transform-origin:100% 50%;">-1.0</div>
<div class="t" style="left:445.24px;top:792.76px;width:51.56px;height:43.88px;line-height:43.88px;font-size:27.6px;color:#202020;text-align:right;transform:rotate(0.2deg) scaleX(0.875);transform-origin:100% 50%;">-2.0</div>
<div class="t" style="left:445.24px;top:840.46px;width:51.56px;height:43.88px;line-height:43.88px;font-size:27.6px;color:#202020;text-align:right;transform:rotate(0.2deg) scaleX(0.875);transform-origin:100% 50%;">-3.0</div>
<div class="t" style="left:445.24px;top:888.16px;width:51.56px;height:43.88px;line-height:43.88px;font-size:27.6px;color:#202020;text-align:right;transform:rotate(0.2deg) scaleX(0.875);transform-origin:100% 50%;">-4.0</div>
<div class="t" style="left:445.24px;top:935.86px;width:51.56px;height:43.88px;line-height:43.88px;font-size:27.6px;color:#202020;text-align:right;transform:rotate(0.2deg) scaleX(0.875);transform-origin:100% 50%;">-5.0</div>
<div class="t" style="left:445.24px;top:983.56px;width:51.56px;height:43.88px;line-height:43.88px;font-size:27.6px;color:#202020;text-align:right;transform:rotate(0.2deg) scaleX(0.875);transform-origin:100% 50%;">-6.0</div>
<div class="t" style="left:445.24px;top:1031.26px;width:51.56px;height:43.88px;line-height:43.88px;font-size:27.6px;color:#202020;text-align:right;transform:rotate(0.2deg) scaleX(0.875);transform-origin:100% 50%;">-7.0</div>
<div class="t" style="left:445.24px;top:1078.96px;width:51.56px;height:43.88px;line-height:43.88px;font-size:27.6px;color:#202020;text-align:right;transform:rotate(0.2deg) scaleX(0.875);transform-origin:100% 50%;">-8.0</div>
<div class="t" style="left:445.24px;top:1126.66px;width:51.56px;height:43.88px;line-height:43.88px;font-size:27.6px;color:#202020;text-align:right;transform:rotate(0.2deg) scaleX(0.875);transform-origin:100% 50%;">-9.0</div>
<div class="t" style="left:429.89px;top:1174.36px;width:66.91px;height:43.88px;line-height:43.88px;font-size:27.6px;color:#202020;text-align:right;transform:rotate(0.2deg) scaleX(0.801);transform-origin:100% 50%;">-10.0</div>
<div class="t" style="left:431.94px;top:1222.06px;width:64.86px;height:43.88px;line-height:43.88px;font-size:27.6px;color:#202020;text-align:right;transform:rotate(0.2deg) scaleX(0.828);transform-origin:100% 50%;">-11.0</div>
<div class="t" style="left:480.14px;top:1253.26px;width:66.91px;height:43.88px;line-height:43.88px;font-size:27.6px;color:#202020;text-align:center;transform:rotate(0.2deg) scaleX(0.865);transform-origin:50% 50%;">-10.0</div>
<div class="t" style="left:558.38px;top:1253.26px;width:51.56px;height:43.88px;line-height:43.88px;font-size:27.6px;color:#202020;text-align:center;transform:rotate(0.2deg) scaleX(0.891);transform-origin:50% 50%;">-9.5</div>
<div class="t" style="left:628.94px;top:1253.26px;width:51.56px;height:43.88px;line-height:43.88px;font-size:27.6px;color:#202020;text-align:center;transform:rotate(0.2deg) scaleX(0.891);transform-origin:50% 50%;">-9.0</div>
<div class="t" style="left:699.5px;top:1253.26px;width:51.56px;height:43.88px;line-height:43.88px;font-size:27.6px;color:#202020;text-align:center;transform:rotate(0.2deg) scaleX(0.891);transform-origin:50% 50%;">-8.5</div>
<div class="t" style="left:770.06px;top:1253.26px;width:51.56px;height:43.88px;line-height:43.88px;font-size:27.6px;color:#202020;text-align:center;transform:rotate(0.2deg) scaleX(0.891);transform-origin:50% 50%;">-8.0</div>
<div class="t" style="left:840.62px;top:1253.26px;width:51.56px;height:43.88px;line-height:43.88px;font-size:27.6px;color:#202020;text-align:center;transform:rotate(0.2deg) scaleX(0.891);transform-origin:50% 50%;">-7.5</div>
<div class="t" style="left:911.18px;top:1253.26px;width:51.56px;height:43.88px;line-height:43.88px;font-size:27.6px;color:#202020;text-align:center;transform:rotate(0.2deg) scaleX(0.891);transform-origin:50% 50%;">-7.0</div>
<div class="t" style="left:981.74px;top:1253.26px;width:51.56px;height:43.88px;line-height:43.88px;font-size:27.6px;color:#202020;text-align:center;transform:rotate(0.2deg) scaleX(0.891);transform-origin:50% 50%;">-6.5</div>
<div class="t" style="left:1052.3px;top:1253.26px;width:51.56px;height:43.88px;line-height:43.88px;font-size:27.6px;color:#202020;text-align:center;transform:rotate(0.2deg) scaleX(0.891);transform-origin:50% 50%;">-6.0</div>
<div class="t" style="left:1122.86px;top:1253.26px;width:51.56px;height:43.88px;line-height:43.88px;font-size:27.6px;color:#202020;text-align:center;transform:rotate(0.2deg) scaleX(0.891);transform-origin:50% 50%;">-5.5</div>
<div class="t" style="left:1193.42px;top:1253.26px;width:51.56px;height:43.88px;line-height:43.88px;font-size:27.6px;color:#202020;text-align:center;transform:rotate(0.2deg) scaleX(0.891);transform-origin:50% 50%;">-5.0</div>
<div class="t" style="left:1263.98px;top:1253.26px;width:51.56px;height:43.88px;line-height:43.88px;font-size:27.6px;color:#202020;text-align:center;transform:rotate(0.2deg) scaleX(0.891);transform-origin:50% 50%;">-4.5</div>
<div class="t" style="left:1334.54px;top:1253.26px;width:51.56px;height:43.88px;line-height:43.88px;font-size:27.6px;color:#202020;text-align:center;transform:rotate(0.2deg) scaleX(0.891);transform-origin:50% 50%;">-4.0</div>
<div class="t" style="left:1405.1px;top:1253.26px;width:51.56px;height:43.88px;line-height:43.88px;font-size:27.6px;color:#202020;text-align:center;transform:rotate(0.2deg) scaleX(0.891);transform-origin:50% 50%;">-3.5</div>
<div class="t" style="left:1475.66px;top:1253.26px;width:51.56px;height:43.88px;line-height:43.88px;font-size:27.6px;color:#202020;text-align:center;transform:rotate(0.2deg) scaleX(0.891);transform-origin:50% 50%;">-3.0</div>
<div class="t" style="left:1546.22px;top:1253.26px;width:51.56px;height:43.88px;line-height:43.88px;font-size:27.6px;color:#202020;text-align:center;transform:rotate(0.2deg) scaleX(0.891);transform-origin:50% 50%;">-2.5</div>
<div class="t" style="left:1616.78px;top:1253.26px;width:51.56px;height:43.88px;line-height:43.88px;font-size:27.6px;color:#202020;text-align:center;transform:rotate(0.2deg) scaleX(0.891);transform-origin:50% 50%;">-2.0</div>
<div class="t" style="left:1687.34px;top:1253.26px;width:51.56px;height:43.88px;line-height:43.88px;font-size:27.6px;color:#202020;text-align:center;transform:rotate(0.2deg) scaleX(0.891);transform-origin:50% 50%;">-1.5</div>
<div class="t" style="left:1757.9px;top:1253.26px;width:51.56px;height:43.88px;line-height:43.88px;font-size:27.6px;color:#202020;text-align:center;transform:rotate(0.2deg) scaleX(0.891);transform-origin:50% 50%;">-1.0</div>
<div class="t" style="left:1828.46px;top:1253.26px;width:51.56px;height:43.88px;line-height:43.88px;font-size:27.6px;color:#202020;text-align:center;transform:rotate(0.2deg) scaleX(0.891);transform-origin:50% 50%;">-0.5</div>
<div class="t" style="left:1905.22px;top:1253.26px;width:42.37px;height:43.88px;line-height:43.88px;font-size:27.6px;color:#202020;text-align:center;transform:rotate(0.2deg) scaleX(0.876);transform-origin:50% 50%;">0.0</div>
<div class="t" style="left:1166.32px;top:1288.46px;width:104.16px;height:43.88px;line-height:43.88px;font-size:27.6px;color:#161616;text-align:center;transform:rotate(0.2deg) scaleX(0.919);transform-origin:50% 50%;">Time (s)</div>
<div style="left:2230.4px;top:513.6px;width:211.2px;height:782.4px;background:#ececec;"></div>
<div style="left:2230.4px;top:513.6px;width:22.4px;height:782.4px;background:linear-gradient(90deg,#fbfbfb,#f4f4f4 60%,#ececec);"></div>
<div style="left:2408px;top:513.6px;width:33.6px;height:782.4px;background:linear-gradient(90deg,#f2f2f2,#dcdcdc 35%,#a8a8a8 75%,#6c6c6c 100%);"></div>
<div style="left:2355.2px;top:518.4px;width:53.6px;height:775.2px;background:#000;"></div>
<div class="t" style="left:2261.6px;top:513.66px;width:65.36px;height:43.88px;line-height:43.88px;font-size:27.6px;color:#2c2c2c;transform:rotate(0.2deg) scaleX(0.900);transform-origin:0 50%;">AIN0</div>
<div class="t" style="left:2261.6px;top:562.97px;width:65.36px;height:43.88px;line-height:43.88px;font-size:27.6px;color:#2c2c2c;transform:rotate(0.2deg) scaleX(0.900);transform-origin:0 50%;">AIN1</div>
<div class="t" style="left:2261.6px;top:612.27px;width:65.36px;height:43.88px;line-height:43.88px;font-size:27.6px;color:#2c2c2c;transform:rotate(0.2deg) scaleX(0.900);transform-origin:0 50%;">AIN2</div>
<div class="t" style="left:2261.6px;top:661.58px;width:65.36px;height:43.88px;line-height:43.88px;font-size:27.6px;color:#2c2c2c;transform:rotate(0.2deg) scaleX(0.900);transform-origin:0 50%;">AIN3</div>
<div class="t" style="left:2261.6px;top:710.89px;width:65.36px;height:43.88px;line-height:43.88px;font-size:27.6px;color:#2c2c2c;transform:rotate(0.2deg) scaleX(0.900);transform-origin:0 50%;">AIN4</div>
<div class="t" style="left:2261.6px;top:760.19px;width:65.36px;height:43.88px;line-height:43.88px;font-size:27.6px;color:#2c2c2c;transform:rotate(0.2deg) scaleX(0.900);transform-origin:0 50%;">AIN5</div>
<div class="t" style="left:2261.6px;top:809.5px;width:65.36px;height:43.88px;line-height:43.88px;font-size:27.6px;color:#2c2c2c;transform:rotate(0.2deg) scaleX(0.900);transform-origin:0 50%;">AIN6</div>
<div class="t" style="left:2261.6px;top:858.81px;width:65.36px;height:43.88px;line-height:43.88px;font-size:27.6px;color:#2c2c2c;transform:rotate(0.2deg) scaleX(0.900);transform-origin:0 50%;">AIN7</div>
<div class="t" style="left:2261.6px;top:908.11px;width:65.36px;height:43.88px;line-height:43.88px;font-size:27.6px;color:#2c2c2c;transform:rotate(0.2deg) scaleX(0.900);transform-origin:0 50%;">AIN8</div>
<div class="t" style="left:2261.6px;top:957.42px;width:65.36px;height:43.88px;line-height:43.88px;font-size:27.6px;color:#2c2c2c;transform:rotate(0.2deg) scaleX(0.900);transform-origin:0 50%;">AIN9</div>
<div class="t" style="left:2261.6px;top:1006.73px;width:80.71px;height:43.88px;line-height:43.88px;font-size:27.6px;color:#2c2c2c;transform:rotate(0.2deg) scaleX(0.907);transform-origin:0 50%;">AIN10</div>
<div class="t" style="left:2261.6px;top:1056.03px;width:78.66px;height:43.88px;line-height:43.88px;font-size:27.6px;color:#2c2c2c;transform:rotate(0.2deg) scaleX(0.932);transform-origin:0 50%;">AIN11</div>
<div class="t" style="left:2261.6px;top:1105.34px;width:80.71px;height:43.88px;line-height:43.88px;font-size:27.6px;color:#2c2c2c;transform:rotate(0.2deg) scaleX(0.907);transform-origin:0 50%;">AIN12</div>
<div class="t" style="left:2261.6px;top:1154.65px;width:80.71px;height:43.88px;line-height:43.88px;font-size:27.6px;color:#2c2c2c;transform:rotate(0.2deg) scaleX(0.907);transform-origin:0 50%;">AIN13</div>
<div class="t" style="left:2261.6px;top:1203.95px;width:80.71px;height:43.88px;line-height:43.88px;font-size:27.6px;color:#2c2c2c;transform:rotate(0.2deg) scaleX(0.907);transform-origin:0 50%;">AIN14</div>
<div class="t" style="left:2261.6px;top:1253.26px;width:80.71px;height:43.88px;line-height:43.88px;font-size:27.6px;color:#2c2c2c;transform:rotate(0.2deg) scaleX(0.907);transform-origin:0 50%;">AIN15</div>
<svg style="left:2355.2px;top:513.6px" width="53.6" height="782.4" viewBox="0 0 13.4 195.6"><g fill="none" stroke-width="0.8" stroke-linejoin="miter"><path d="M0.2 7.7 L6.2 3 L10.3 8.6 L13.4 6" stroke="#e0e0e0"/><path d="M0.2 20.03 L6.2 15.33 L10.3 20.93 L13.4 18.33" stroke="#c44040"/><path d="M0.2 32.35 L6.2 27.65 L10.3 33.25 L13.4 30.65" stroke="#1fc81f"/><path d="M0.2 44.68 L6.2 39.98 L10.3 45.58 L13.4 42.98" stroke="#3b94c4"/><path d="M0.2 57.01 L6.2 52.31 L10.3 57.91 L13.4 55.31" stroke="#a6ac50"/><path d="M0.2 69.33 L6.2 64.63 L10.3 70.23 L13.4 67.63" stroke="#a648c8"/><path d="M0.2 81.66 L6.2 76.96 L10.3 82.56 L13.4 79.96" stroke="#d09020"/><path d="M0.2 93.99 L6.2 89.29 L10.3 94.89 L13.4 92.29" stroke="#3a48c8"/><path d="M0.2 106.31 L6.2 101.61 L10.3 107.21 L13.4 104.61" stroke="#d64fae"/><path d="M0.2 118.64 L6.2 113.94 L10.3 119.54 L13.4 116.94" stroke="#3dbcae"/><path d="M0.2 130.97 L6.2 126.27 L10.3 131.87 L13.4 129.27" stroke="#c4c4c4"/><path d="M0.2 143.29 L6.2 138.59 L10.3 144.19 L13.4 141.59" stroke="#d24a34"/><path d="M0.2 155.62 L6.2 150.92 L10.3 156.52 L13.4 153.92" stroke="#1fc81f"/><path d="M0.2 167.95 L6.2 163.25 L10.3 168.85 L13.4 166.25" stroke="#3b94c4"/><path d="M0.2 180.27 L6.2 175.57 L10.3 181.17 L13.4 178.57" stroke="#a6ac50"/><path d="M0.2 192.6 L6.2 187.9 L10.3 193.5 L13.4 190.9" stroke="#a648c8"/></g></svg>
<div class="t" style="left:412px;top:1340.86px;width:174.25px;height:43.88px;line-height:43.88px;font-size:27.6px;color:#161616;transform:rotate(0.2deg) scaleX(0.916);transform-origin:0 50%;">Graph History</div>
<div style="left:408.8px;top:1380.8px;width:134.4px;height:45.6px;background:#fff;box-shadow:inset 0 0 0 2.4px #b4b4b4;"></div>
<div class="t" style="left:417.6px;top:1383.12px;width:49.38px;height:43.36px;line-height:43.36px;font-size:27.2px;color:#262626;transform:rotate(0.2deg) scaleX(0.864);transform-origin:0 50%;">500</div>
<div style="left:508px;top:1384px;width:30.4px;height:38.4px;background:#f0f0f0;box-shadow:inset 0 0 0 2px #b8b8b8;"></div>
<svg style="left:508px;top:1384px" width="30.4" height="38.4" viewBox="0 0 7.6 9.6"><path d="M3.8 2 L5.2 3.8 H2.4Z M3.8 7.6 L5.2 5.8 H2.4Z" fill="#222"/><path d="M0.6 4.8H7" stroke="#b0b0b0" stroke-width="0.4"/></svg>
<div class="t" style="left:591.2px;top:1340.86px;width:224.9px;height:43.88px;line-height:43.88px;font-size:27.6px;color:#161616;transform:rotate(0.2deg) scaleX(0.914);transform-origin:0 50%;">Num Graphed Pts</div>
<div style="left:588px;top:1381.6px;width:106.4px;height:44.8px;background:#ebebeb;box-shadow:inset 0 0 0 2.4px #b8b8b8;"></div>
<div class="t" style="left:598.4px;top:1382.32px;width:49.38px;height:43.36px;line-height:43.36px;font-size:27.2px;color:#262626;transform:rotate(0.2deg) scaleX(0.864);transform-origin:0 50%;">500</div>
<div style="left:824px;top:1343.2px;width:388.8px;height:38.4px;background:#fff;box-shadow:inset 0 0 0 3.6px #9a9a9a;"></div>
<div style="left:1173.6px;top:1347.2px;width:35.2px;height:30.4px;background:#e8e8e8;box-shadow:inset 0 0 0 2px #c0c0c0;"></div>
<svg style="left:1172.8px;top:1345.6px" width="37.6" height="33.6" viewBox="0 0 9.4 8.4"><path d="M2.5 3.2 L4.7 5.4 L6.9 3.2" stroke="#555" stroke-width="0.7" fill="none"/></svg>
<div class="t" style="left:931.26px;top:1338.86px;width:137.49px;height:43.88px;line-height:43.88px;font-size:27.6px;color:#161616;text-align:center;transform:rotate(0.2deg) scaleX(0.899);transform-origin:50% 50%;">Auto Scale</div>
<div style="left:824px;top:1388px;width:200.8px;height:39.2px;background:#e4e4e4;box-shadow:inset 0 0 0 2.4px #b4b4b4;"></div>
<div class="t" style="left:816.17px;top:1383.66px;width:217.26px;height:43.88px;line-height:43.88px;font-size:27.6px;color:#161616;text-align:center;transform:rotate(0.2deg) scaleX(0.853);transform-origin:50% 50%;">Edit Exp. Ranges</div>
<div style="left:1037.6px;top:1388px;width:175.2px;height:39.2px;background:#e4e4e4;box-shadow:inset 0 0 0 2.4px #b4b4b4;"></div>
<div class="t" style="left:1034.62px;top:1383.66px;width:181.96px;height:43.88px;line-height:43.88px;font-size:27.6px;color:#161616;text-align:center;transform:rotate(0.2deg) scaleX(0.877);transform-origin:50% 50%;">Re-Auto Scale</div>
<div class="t" style="left:1264px;top:1334.46px;width:177.38px;height:43.88px;line-height:43.88px;font-size:27.6px;color:#161616;transform:rotate(0.2deg) scaleX(0.888);transform-origin:0 50%;">Update Graph</div>
<svg style="left:1279.2px;top:1370.4px" width="110.4" height="48" viewBox="0 0 27.6 12"><defs><linearGradient id="tg" x1="0" y1="0" x2="0" y2="1"><stop offset="0" stop-color="#f4f4f4"/><stop offset="0.5" stop-color="#ffffff"/><stop offset="1" stop-color="#e4e4e4"/></linearGradient><linearGradient id="ts" x1="0" y1="0" x2="0" y2="1"><stop offset="0" stop-color="#8a8a8a"/><stop offset="1" stop-color="#4a4a4a"/></linearGradient><radialGradient id="tl" cx="0.4" cy="0.45" r="0.7"><stop offset="0" stop-color="#7cf640"/><stop offset="0.6" stop-color="#52e018"/><stop offset="1" stop-color="#38c008"/></radialGradient></defs><ellipse cx="13.8" cy="6" rx="13.2" ry="5.4" fill="url(#tg)" stroke="url(#ts)" stroke-width="0.7"/><path d="M17.2 3.2 C18.6 3 20.6 3.4 23.8 6 C20.6 8.6 18.6 9 17.2 8.8 Z" fill="url(#tl)"/></svg>
<div class="t" style="left:1288px;top:1416.46px;width:465.83px;height:43.88px;line-height:43.88px;font-size:27.6px;color:#161616;transform:rotate(0.2deg) scaleX(0.927);transform-origin:0 50%;">Note: Before using graph zoom &amp; pan</div>
<div class="t" style="left:1288px;top:1446.86px;width:540.66px;height:43.88px;line-height:43.88px;font-size:27.6px;color:#161616;transform:rotate(0.2deg) scaleX(0.928);transform-origin:0 50%;">controls, disable the "Update Graph" option.</div>
<div style="left:1444px;top:1330.4px;width:187.2px;height:52px;background:linear-gradient(90deg,#fdfdfd 0%,#f4f4f4 12%,#dcdcdc 45%,#c6c6c6 90%,#8c8c8c 96.5%,#4c4c4c 100%);"></div>
<div style="left:1444px;top:1377.6px;width:181.6px;height:4.8px;background:linear-gradient(90deg,rgba(200,200,200,.4),rgba(120,120,120,.85));"></div>
<svg style="left:1470.4px;top:1339.2px" width="134.4" height="33.6" viewBox="0 0 33.6 8.4"><rect x="0.2" y="0.2" width="10.6" height="8" fill="#c9c9c9" stroke="#9a9a9a" stroke-width="0.4"/><path d="M5.6 1.2V7.4M1.8 4.6H9.6" stroke="#1c1c1c" stroke-width="0.85"/><rect x="1.3" y="1" width="1.5" height="1.5" fill="#2fb52f"/><rect x="11.4" y="0.2" width="10.6" height="8" fill="#4e4e4e" stroke="#2a2a2a" stroke-width="0.4"/><circle cx="17.2" cy="3.6" r="2.1" fill="#c8d2f0" stroke="#1a1a50" stroke-width="0.7"/><path d="M15.6 5.4 L13.4 7.8M18.6 5.6 L20.4 7.8" stroke="#111" stroke-width="0.9"/><rect x="12.5" y="1" width="1.5" height="1.5" fill="#35c135"/><rect x="22.6" y="0.2" width="10.6" height="8" fill="#c9c9c9" stroke="#9a9a9a" stroke-width="0.4"/><path d="M25 7.6 V4.6 L25.8 3 L26.6 4.4 V2 L27.6 1.7 L28 4 V1.5 L29.2 1.6 V4 L29.8 2 L30.8 2.4 L31.2 5.4 L30.2 7.6 Z" fill="#6a6a6a" stroke="#2a2a2a" stroke-width="0.45"/><path d="M27 5 H29.6 V7 H27Z" fill="#e8e8e8"/><rect x="23.7" y="1" width="1.5" height="1.5" fill="#2fb52f"/></svg>
<div style="left:1644px;top:1336px;width:333.6px;height:37.6px;background:#e6e6e6;"></div>
<div style="left:1645.6px;top:1337.6px;width:34.4px;height:34.4px;background:#efefef;box-shadow:inset 0 0 0 2px #c4c4c4;"></div>
<div style="left:1942.4px;top:1337.6px;width:34.4px;height:34.4px;background:#efefef;box-shadow:inset 0 0 0 2px #c4c4c4;"></div>
<svg style="left:1644px;top:1336px" width="336" height="37.6" viewBox="0 0 84 9.4"><path d="M5.6 3.6 L4.2 4.7 L5.6 5.8Z M78.4 3.6 L79.8 4.7 L78.4 5.8Z" fill="#999"/></svg>
<div class="t" style="left:1734.22px;top:1378.86px;width:241.78px;height:43.88px;line-height:43.88px;font-size:27.6px;color:#161616;text-align:right;transform:rotate(0.2deg) scaleX(0.875);transform-origin:100% 50%;">Export Graph Data<span>:</span></div>
<div style="left:1825.6px;top:1423.2px;width:149.6px;height:41.6px;background:#e8e8e8;box-shadow:inset 0 0 0 2.4px #b8b8b8;"></div>
<div class="t" style="left:1822.85px;top:1421.66px;width:155.9px;height:43.88px;line-height:43.88px;font-size:27.6px;color:#161616;text-align:center;transform:rotate(0.2deg) scaleX(0.856);transform-origin:50% 50%;">Save as .jpg</div>
</div></div></body></html>
